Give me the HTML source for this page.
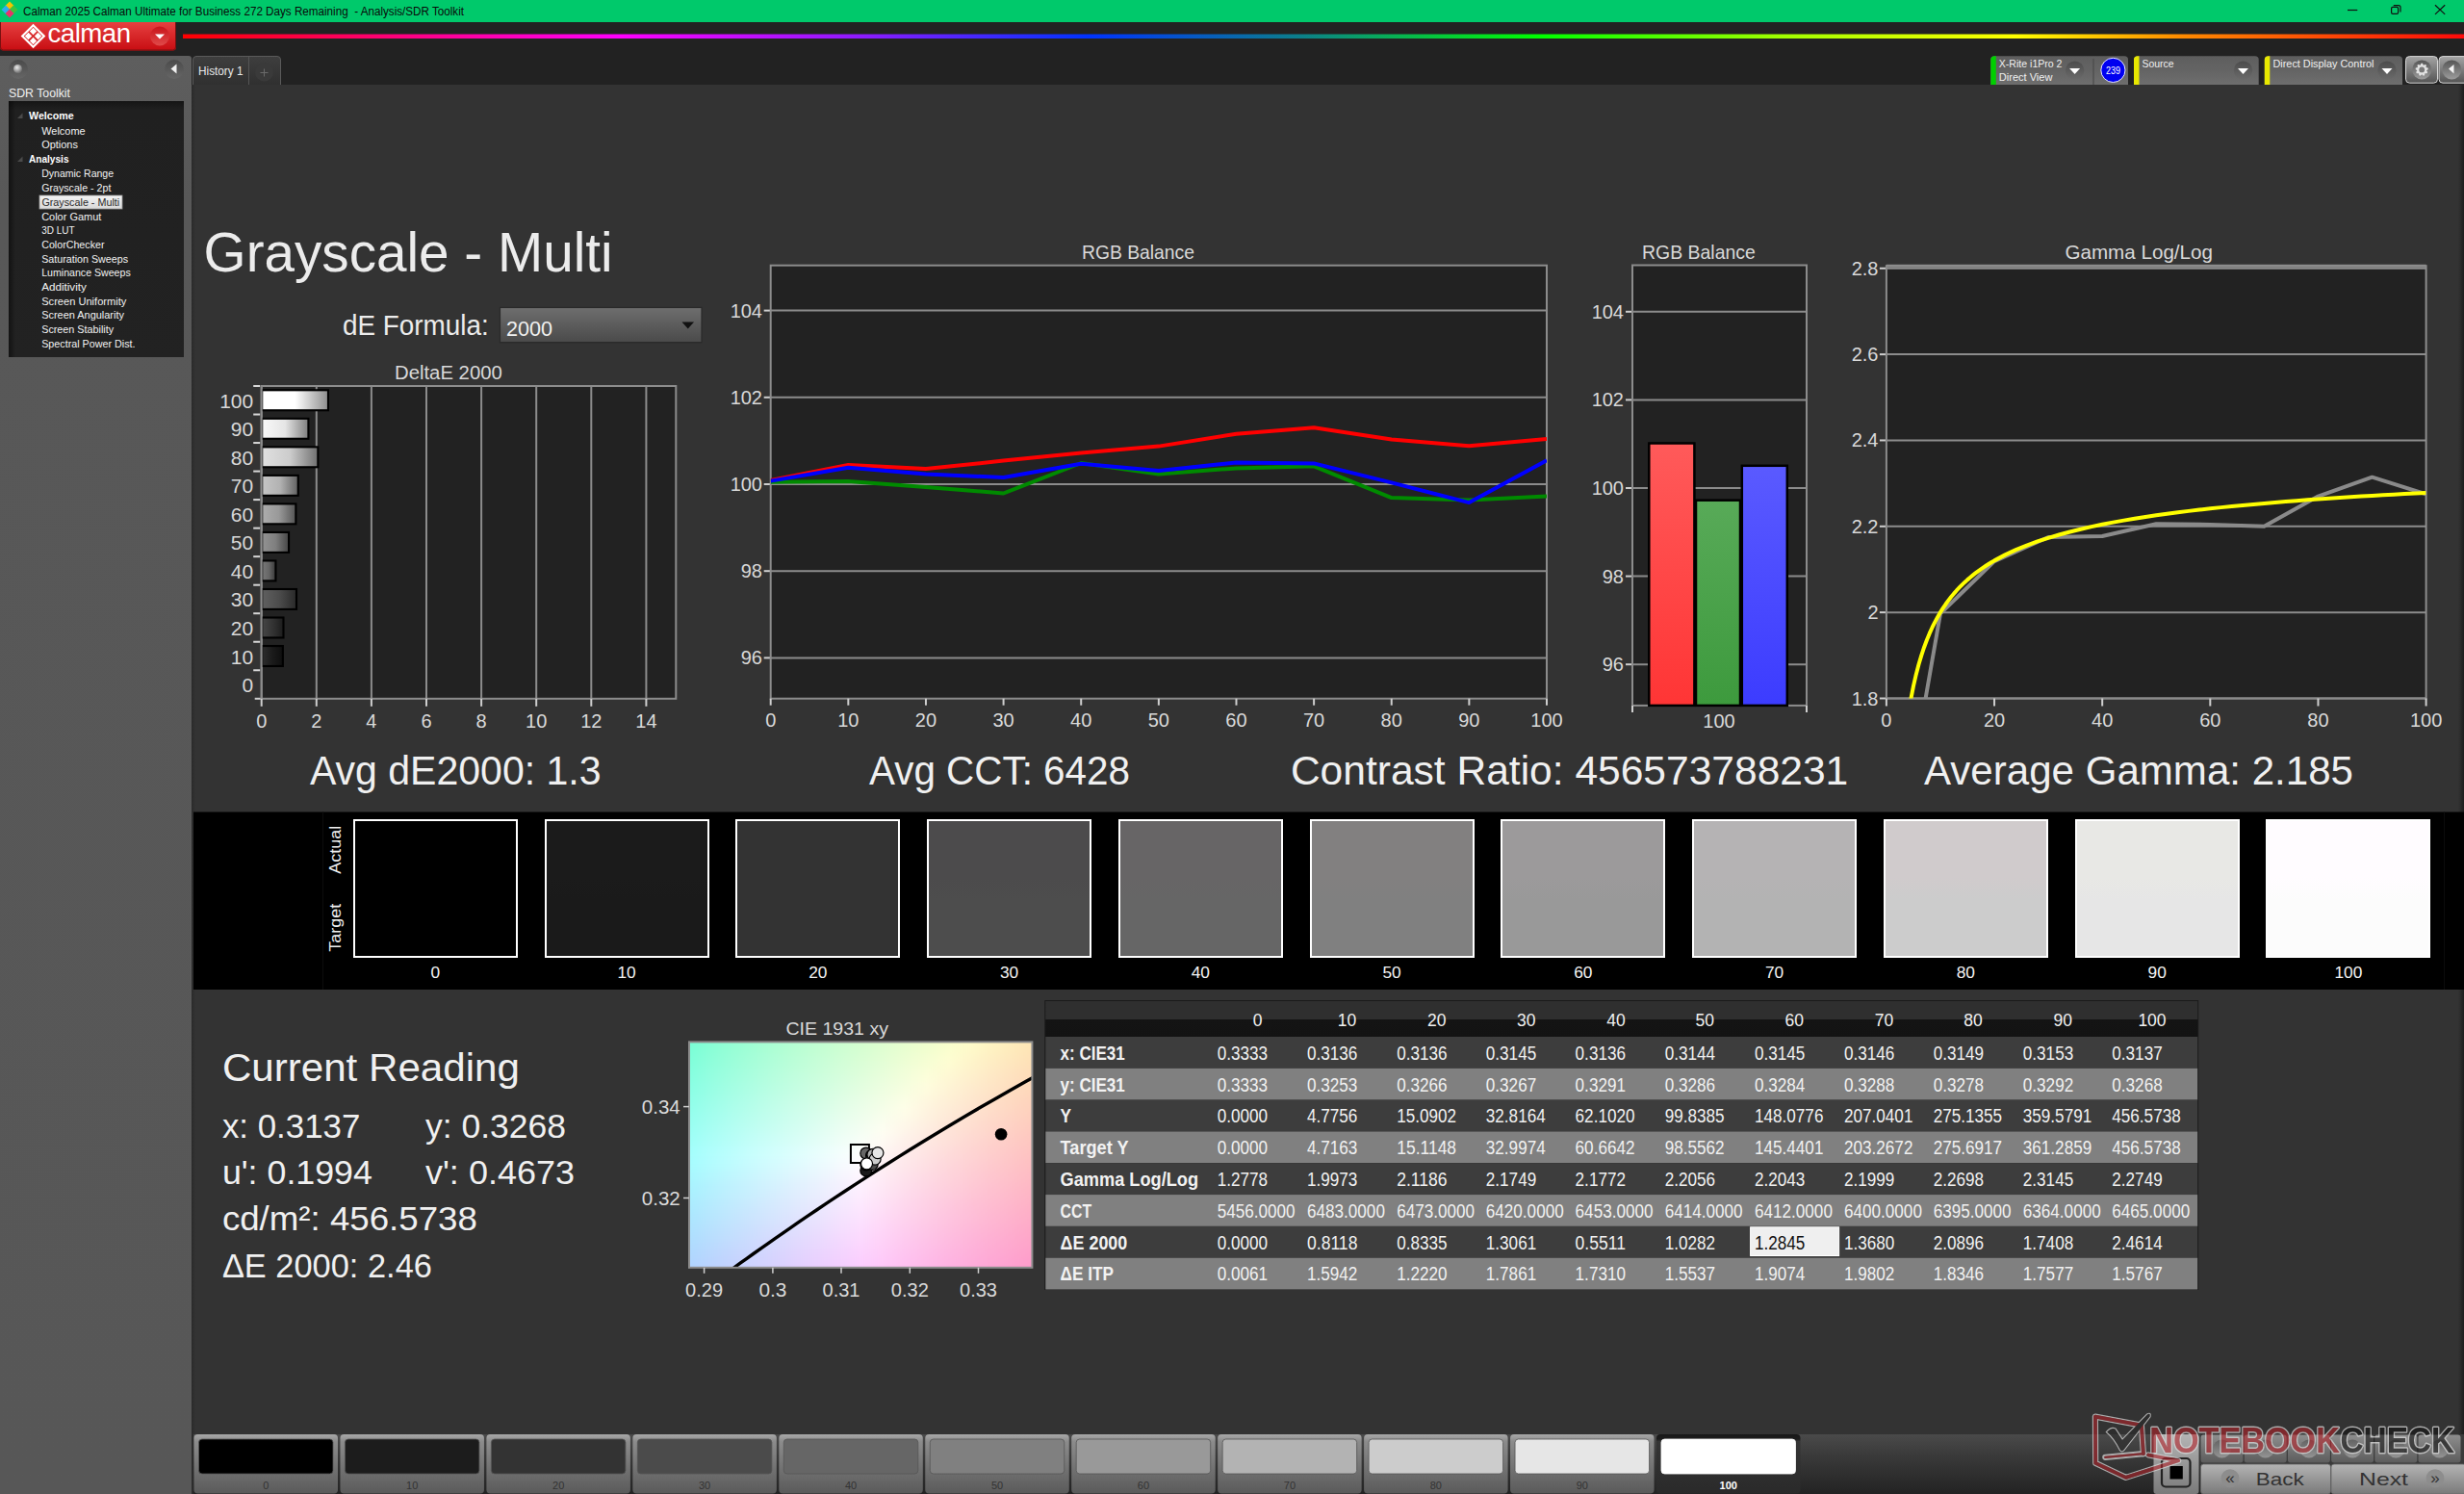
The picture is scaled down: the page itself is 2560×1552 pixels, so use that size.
<!DOCTYPE html>
<html><head><meta charset="utf-8"><title>Calman - Grayscale Multi</title>
<style>html,body{margin:0;padding:0;background:#333;overflow:hidden;width:2560px;height:1552px}svg{display:block}text{font-family:"Liberation Sans",sans-serif}</style>
</head><body><svg width="2560" height="1552" viewBox="0 0 2560 1552" font-family='"Liberation Sans", sans-serif'><defs><linearGradient id="rainbow" x1="0" y1="0" x2="1" y2="0"><stop offset="0" stop-color="#ff0000"/><stop offset="0.192" stop-color="#ff00ff"/><stop offset="0.3" stop-color="#8a1cff"/><stop offset="0.397" stop-color="#0033ff"/><stop offset="0.49" stop-color="#0c7f8a"/><stop offset="0.595" stop-color="#00ff00"/><stop offset="0.7" stop-color="#a0ff00"/><stop offset="0.803" stop-color="#ffff00"/><stop offset="0.875" stop-color="#ff8c00"/><stop offset="1" stop-color="#ff0a0a"/></linearGradient><linearGradient id="calred" x1="0" y1="0" x2="0" y2="1"><stop offset="0" stop-color="#e64040"/><stop offset="1" stop-color="#c80d12"/></linearGradient><linearGradient id="calcirc" x1="0" y1="0" x2="0" y2="1"><stop offset="0" stop-color="#c8141a"/><stop offset="1" stop-color="#e04a4a"/></linearGradient><linearGradient id="sideg" x1="0" y1="0" x2="0" y2="1"><stop offset="0" stop-color="#5e5e5e"/><stop offset="0.1" stop-color="#585858"/><stop offset="1" stop-color="#575757"/></linearGradient><linearGradient id="sbtn" x1="0" y1="0" x2="0" y2="1"><stop offset="0" stop-color="#4a4a4a"/><stop offset="1" stop-color="#666"/></linearGradient><linearGradient id="treeg" x1="0" y1="0" x2="0" y2="1"><stop offset="0" stop-color="#151515"/><stop offset="0.035" stop-color="#202020"/><stop offset="1" stop-color="#222222"/></linearGradient><linearGradient id="selg" x1="0" y1="0" x2="0" y2="1"><stop offset="0" stop-color="#f4f4f4"/><stop offset="1" stop-color="#d8d8d8"/></linearGradient><linearGradient id="tabg" x1="0" y1="0" x2="0" y2="1"><stop offset="0" stop-color="#3e3e3e"/><stop offset="1" stop-color="#303030"/></linearGradient><linearGradient id="tbox" x1="0" y1="0" x2="0" y2="1"><stop offset="0" stop-color="#5e5e5e"/><stop offset="0.5" stop-color="#646464"/><stop offset="1" stop-color="#6e6e6e"/></linearGradient><linearGradient id="ddc" x1="0" y1="0" x2="0" y2="1"><stop offset="0" stop-color="#4c4c4c"/><stop offset="1" stop-color="#6a6a6a"/></linearGradient><linearGradient id="gbtn" x1="0" y1="0" x2="0" y2="1"><stop offset="0" stop-color="#a4a4a4"/><stop offset="0.45" stop-color="#808080"/><stop offset="1" stop-color="#545454"/></linearGradient><linearGradient id="gcirc" x1="0" y1="0" x2="0" y2="1"><stop offset="0" stop-color="#555555"/><stop offset="1" stop-color="#9c9c9c"/></linearGradient><linearGradient id="rstrip" x1="0" y1="0" x2="1" y2="0"><stop offset="0" stop-color="#333333"/><stop offset="1" stop-color="#1c1c1c"/></linearGradient><linearGradient id="lshade" x1="0" y1="0" x2="1" y2="0"><stop offset="0" stop-color="#2a2a2a"/><stop offset="1" stop-color="#333333"/></linearGradient><linearGradient id="ddbox" x1="0" y1="0" x2="0" y2="1"><stop offset="0" stop-color="#6e6e6e"/><stop offset="1" stop-color="#4a4a4a"/></linearGradient><linearGradient id="bar100" x1="0" y1="0" x2="1" y2="0"><stop offset="0" stop-color="rgb(255,255,255)"/><stop offset="0.5" stop-color="rgb(255,255,255)"/><stop offset="1" stop-color="rgb(140,140,140)"/></linearGradient><linearGradient id="bar90" x1="0" y1="0" x2="1" y2="0"><stop offset="0" stop-color="rgb(249,249,249)"/><stop offset="0.5" stop-color="rgb(229,229,229)"/><stop offset="1" stop-color="rgb(125,125,125)"/></linearGradient><linearGradient id="bar80" x1="0" y1="0" x2="1" y2="0"><stop offset="0" stop-color="rgb(224,224,224)"/><stop offset="0.5" stop-color="rgb(204,204,204)"/><stop offset="1" stop-color="rgb(112,112,112)"/></linearGradient><linearGradient id="bar70" x1="0" y1="0" x2="1" y2="0"><stop offset="0" stop-color="rgb(198,198,198)"/><stop offset="0.5" stop-color="rgb(178,178,178)"/><stop offset="1" stop-color="rgb(97,97,97)"/></linearGradient><linearGradient id="bar60" x1="0" y1="0" x2="1" y2="0"><stop offset="0" stop-color="rgb(173,173,173)"/><stop offset="0.5" stop-color="rgb(153,153,153)"/><stop offset="1" stop-color="rgb(84,84,84)"/></linearGradient><linearGradient id="bar50" x1="0" y1="0" x2="1" y2="0"><stop offset="0" stop-color="rgb(147,147,147)"/><stop offset="0.5" stop-color="rgb(127,127,127)"/><stop offset="1" stop-color="rgb(69,69,69)"/></linearGradient><linearGradient id="bar40" x1="0" y1="0" x2="1" y2="0"><stop offset="0" stop-color="rgb(122,122,122)"/><stop offset="0.5" stop-color="rgb(102,102,102)"/><stop offset="1" stop-color="rgb(56,56,56)"/></linearGradient><linearGradient id="bar30" x1="0" y1="0" x2="1" y2="0"><stop offset="0" stop-color="rgb(96,96,96)"/><stop offset="0.5" stop-color="rgb(76,76,76)"/><stop offset="1" stop-color="rgb(41,41,41)"/></linearGradient><linearGradient id="bar20" x1="0" y1="0" x2="1" y2="0"><stop offset="0" stop-color="rgb(71,71,71)"/><stop offset="0.5" stop-color="rgb(51,51,51)"/><stop offset="1" stop-color="rgb(28,28,28)"/></linearGradient><linearGradient id="bar10" x1="0" y1="0" x2="1" y2="0"><stop offset="0" stop-color="rgb(46,46,46)"/><stop offset="0.5" stop-color="rgb(26,26,26)"/><stop offset="1" stop-color="rgb(14,14,14)"/></linearGradient><linearGradient id="rbar" x1="0" y1="0" x2="0" y2="1"><stop offset="0" stop-color="#ff5a5a"/><stop offset="1" stop-color="#ff3535"/></linearGradient><linearGradient id="gbar" x1="0" y1="0" x2="0" y2="1"><stop offset="0" stop-color="#58aa58"/><stop offset="1" stop-color="#3d9a3d"/></linearGradient><linearGradient id="bbar" x1="0" y1="0" x2="0" y2="1"><stop offset="0" stop-color="#5a5aff"/><stop offset="1" stop-color="#3c3cff"/></linearGradient><linearGradient id="sw0" x1="0" y1="0" x2="0" y2="1"><stop offset="0" stop-color="#000000"/><stop offset="0.42" stop-color="#000000"/><stop offset="0.58" stop-color="#000000"/><stop offset="1" stop-color="#000000"/></linearGradient><linearGradient id="sw1" x1="0" y1="0" x2="0" y2="1"><stop offset="0" stop-color="#1b1b1b"/><stop offset="0.42" stop-color="#1b1b1b"/><stop offset="0.58" stop-color="#1a1a1a"/><stop offset="1" stop-color="#1a1a1a"/></linearGradient><linearGradient id="sw2" x1="0" y1="0" x2="0" y2="1"><stop offset="0" stop-color="#333333"/><stop offset="0.42" stop-color="#333333"/><stop offset="0.58" stop-color="#333333"/><stop offset="1" stop-color="#333333"/></linearGradient><linearGradient id="sw3" x1="0" y1="0" x2="0" y2="1"><stop offset="0" stop-color="#4c4b4c"/><stop offset="0.42" stop-color="#4c4b4c"/><stop offset="0.58" stop-color="#4d4d4d"/><stop offset="1" stop-color="#4d4d4d"/></linearGradient><linearGradient id="sw4" x1="0" y1="0" x2="0" y2="1"><stop offset="0" stop-color="#676566"/><stop offset="0.42" stop-color="#676566"/><stop offset="0.58" stop-color="#666666"/><stop offset="1" stop-color="#666666"/></linearGradient><linearGradient id="sw5" x1="0" y1="0" x2="0" y2="1"><stop offset="0" stop-color="#828080"/><stop offset="0.42" stop-color="#828080"/><stop offset="0.58" stop-color="#808080"/><stop offset="1" stop-color="#808080"/></linearGradient><linearGradient id="sw6" x1="0" y1="0" x2="0" y2="1"><stop offset="0" stop-color="#9c9a9b"/><stop offset="0.42" stop-color="#9c9a9b"/><stop offset="0.58" stop-color="#999999"/><stop offset="1" stop-color="#999999"/></linearGradient><linearGradient id="sw7" x1="0" y1="0" x2="0" y2="1"><stop offset="0" stop-color="#b5b3b4"/><stop offset="0.42" stop-color="#b5b3b4"/><stop offset="0.58" stop-color="#b3b3b3"/><stop offset="1" stop-color="#b3b3b3"/></linearGradient><linearGradient id="sw8" x1="0" y1="0" x2="0" y2="1"><stop offset="0" stop-color="#d0cbcc"/><stop offset="0.42" stop-color="#d0cbcc"/><stop offset="0.58" stop-color="#cccccc"/><stop offset="1" stop-color="#cccccc"/></linearGradient><linearGradient id="sw9" x1="0" y1="0" x2="0" y2="1"><stop offset="0" stop-color="#e8e8e5"/><stop offset="0.42" stop-color="#e8e8e5"/><stop offset="0.58" stop-color="#e6e6e6"/><stop offset="1" stop-color="#e6e6e6"/></linearGradient><linearGradient id="sw10" x1="0" y1="0" x2="0" y2="1"><stop offset="0" stop-color="#fffcff"/><stop offset="0.42" stop-color="#fffcff"/><stop offset="0.58" stop-color="#fcfcfc"/><stop offset="1" stop-color="#fcfcfc"/></linearGradient><linearGradient id="cie0" x1="0" y1="0" x2="1" y2="0"><stop offset="0.0" stop-color="#71ffd2"/><stop offset="0.0625" stop-color="#81ffd1"/><stop offset="0.125" stop-color="#8fffd1"/><stop offset="0.1875" stop-color="#9bffd0"/><stop offset="0.25" stop-color="#a7ffcf"/><stop offset="0.3125" stop-color="#b2ffce"/><stop offset="0.375" stop-color="#bcffcd"/><stop offset="0.4375" stop-color="#c7ffcd"/><stop offset="0.5" stop-color="#d0ffcc"/><stop offset="0.5625" stop-color="#daffcb"/><stop offset="0.625" stop-color="#e3ffca"/><stop offset="0.6875" stop-color="#ecffc9"/><stop offset="0.75" stop-color="#f5ffc8"/><stop offset="0.8125" stop-color="#feffc7"/><stop offset="0.875" stop-color="#fff8c0"/><stop offset="0.9375" stop-color="#fff0b9"/><stop offset="1.0" stop-color="#ffe9b2"/></linearGradient><linearGradient id="cie1" x1="0" y1="0" x2="1" y2="0"><stop offset="0.0" stop-color="#74ffd4"/><stop offset="0.0625" stop-color="#84ffd4"/><stop offset="0.125" stop-color="#91ffd3"/><stop offset="0.1875" stop-color="#9effd2"/><stop offset="0.25" stop-color="#a9ffd2"/><stop offset="0.3125" stop-color="#b4ffd1"/><stop offset="0.375" stop-color="#bfffd0"/><stop offset="0.4375" stop-color="#c9ffcf"/><stop offset="0.5" stop-color="#d3ffcf"/><stop offset="0.5625" stop-color="#dcffce"/><stop offset="0.625" stop-color="#e6ffcd"/><stop offset="0.6875" stop-color="#efffcc"/><stop offset="0.75" stop-color="#f8ffcb"/><stop offset="0.8125" stop-color="#fffec9"/><stop offset="0.875" stop-color="#fff5c1"/><stop offset="0.9375" stop-color="#ffeeba"/><stop offset="1.0" stop-color="#ffe6b3"/></linearGradient><linearGradient id="cie2" x1="0" y1="0" x2="1" y2="0"><stop offset="0.0" stop-color="#77ffd7"/><stop offset="0.0625" stop-color="#86ffd6"/><stop offset="0.125" stop-color="#94ffd6"/><stop offset="0.1875" stop-color="#a0ffd5"/><stop offset="0.25" stop-color="#acffd4"/><stop offset="0.3125" stop-color="#b7ffd4"/><stop offset="0.375" stop-color="#c2ffd3"/><stop offset="0.4375" stop-color="#ccffd2"/><stop offset="0.5" stop-color="#d5ffd1"/><stop offset="0.5625" stop-color="#dfffd1"/><stop offset="0.625" stop-color="#e8ffd0"/><stop offset="0.6875" stop-color="#f1ffcf"/><stop offset="0.75" stop-color="#faffce"/><stop offset="0.8125" stop-color="#fffbca"/><stop offset="0.875" stop-color="#fff3c2"/><stop offset="0.9375" stop-color="#ffebbb"/><stop offset="1.0" stop-color="#ffe4b4"/></linearGradient><linearGradient id="cie3" x1="0" y1="0" x2="1" y2="0"><stop offset="0.0" stop-color="#7affda"/><stop offset="0.0625" stop-color="#89ffd9"/><stop offset="0.125" stop-color="#97ffd8"/><stop offset="0.1875" stop-color="#a3ffd8"/><stop offset="0.25" stop-color="#afffd7"/><stop offset="0.3125" stop-color="#baffd6"/><stop offset="0.375" stop-color="#c4ffd6"/><stop offset="0.4375" stop-color="#ceffd5"/><stop offset="0.5" stop-color="#d8ffd4"/><stop offset="0.5625" stop-color="#e2ffd4"/><stop offset="0.625" stop-color="#ebffd3"/><stop offset="0.6875" stop-color="#f4ffd2"/><stop offset="0.75" stop-color="#fdffd1"/><stop offset="0.8125" stop-color="#fff8cb"/><stop offset="0.875" stop-color="#fff0c3"/><stop offset="0.9375" stop-color="#ffe9bc"/><stop offset="1.0" stop-color="#ffe1b5"/></linearGradient><linearGradient id="cie4" x1="0" y1="0" x2="1" y2="0"><stop offset="0.0" stop-color="#7dffdc"/><stop offset="0.0625" stop-color="#8cffdc"/><stop offset="0.125" stop-color="#99ffdb"/><stop offset="0.1875" stop-color="#a6ffda"/><stop offset="0.25" stop-color="#b1ffda"/><stop offset="0.3125" stop-color="#bcffd9"/><stop offset="0.375" stop-color="#c7ffd9"/><stop offset="0.4375" stop-color="#d1ffd8"/><stop offset="0.5" stop-color="#dbffd7"/><stop offset="0.5625" stop-color="#e4ffd7"/><stop offset="0.625" stop-color="#eeffd6"/><stop offset="0.6875" stop-color="#f7ffd5"/><stop offset="0.75" stop-color="#fffed3"/><stop offset="0.8125" stop-color="#fff5cb"/><stop offset="0.875" stop-color="#ffedc4"/><stop offset="0.9375" stop-color="#ffe6bd"/><stop offset="1.0" stop-color="#ffdfb6"/></linearGradient><linearGradient id="cie5" x1="0" y1="0" x2="1" y2="0"><stop offset="0.0" stop-color="#80ffdf"/><stop offset="0.0625" stop-color="#8fffde"/><stop offset="0.125" stop-color="#9cffde"/><stop offset="0.1875" stop-color="#a8ffdd"/><stop offset="0.25" stop-color="#b4ffdd"/><stop offset="0.3125" stop-color="#bfffdc"/><stop offset="0.375" stop-color="#c9ffdb"/><stop offset="0.4375" stop-color="#d4ffdb"/><stop offset="0.5" stop-color="#ddffda"/><stop offset="0.5625" stop-color="#e7ffda"/><stop offset="0.625" stop-color="#f1ffd9"/><stop offset="0.6875" stop-color="#faffd8"/><stop offset="0.75" stop-color="#fffbd4"/><stop offset="0.8125" stop-color="#fff3cc"/><stop offset="0.875" stop-color="#ffebc5"/><stop offset="0.9375" stop-color="#ffe3be"/><stop offset="1.0" stop-color="#ffddb7"/></linearGradient><linearGradient id="cie6" x1="0" y1="0" x2="1" y2="0"><stop offset="0.0" stop-color="#83ffe1"/><stop offset="0.0625" stop-color="#92ffe1"/><stop offset="0.125" stop-color="#9fffe0"/><stop offset="0.1875" stop-color="#abffe0"/><stop offset="0.25" stop-color="#b7ffdf"/><stop offset="0.3125" stop-color="#c2ffdf"/><stop offset="0.375" stop-color="#ccffde"/><stop offset="0.4375" stop-color="#d6ffde"/><stop offset="0.5" stop-color="#e0ffdd"/><stop offset="0.5625" stop-color="#eaffdd"/><stop offset="0.625" stop-color="#f3ffdc"/><stop offset="0.6875" stop-color="#fdffdb"/><stop offset="0.75" stop-color="#fff8d5"/><stop offset="0.8125" stop-color="#fff0cd"/><stop offset="0.875" stop-color="#ffe8c6"/><stop offset="0.9375" stop-color="#ffe1bf"/><stop offset="1.0" stop-color="#ffdab8"/></linearGradient><linearGradient id="cie7" x1="0" y1="0" x2="1" y2="0"><stop offset="0.0" stop-color="#86ffe4"/><stop offset="0.0625" stop-color="#94ffe4"/><stop offset="0.125" stop-color="#a2ffe3"/><stop offset="0.1875" stop-color="#aeffe3"/><stop offset="0.25" stop-color="#b9ffe2"/><stop offset="0.3125" stop-color="#c4ffe2"/><stop offset="0.375" stop-color="#cfffe1"/><stop offset="0.4375" stop-color="#d9ffe1"/><stop offset="0.5" stop-color="#e3ffe0"/><stop offset="0.5625" stop-color="#edffe0"/><stop offset="0.625" stop-color="#f6ffdf"/><stop offset="0.6875" stop-color="#fffede"/><stop offset="0.75" stop-color="#fff5d6"/><stop offset="0.8125" stop-color="#ffedce"/><stop offset="0.875" stop-color="#ffe6c6"/><stop offset="0.9375" stop-color="#ffdec0"/><stop offset="1.0" stop-color="#ffd8b9"/></linearGradient><linearGradient id="cie8" x1="0" y1="0" x2="1" y2="0"><stop offset="0.0" stop-color="#89ffe7"/><stop offset="0.0625" stop-color="#97ffe6"/><stop offset="0.125" stop-color="#a4ffe6"/><stop offset="0.1875" stop-color="#b0ffe6"/><stop offset="0.25" stop-color="#bcffe5"/><stop offset="0.3125" stop-color="#c7ffe5"/><stop offset="0.375" stop-color="#d2ffe4"/><stop offset="0.4375" stop-color="#dcffe4"/><stop offset="0.5" stop-color="#e6ffe3"/><stop offset="0.5625" stop-color="#f0ffe3"/><stop offset="0.625" stop-color="#f9ffe2"/><stop offset="0.6875" stop-color="#fffbdf"/><stop offset="0.75" stop-color="#fff3d6"/><stop offset="0.8125" stop-color="#ffeacf"/><stop offset="0.875" stop-color="#ffe3c7"/><stop offset="0.9375" stop-color="#ffdcc0"/><stop offset="1.0" stop-color="#ffd5ba"/></linearGradient><linearGradient id="cie9" x1="0" y1="0" x2="1" y2="0"><stop offset="0.0" stop-color="#8cffea"/><stop offset="0.0625" stop-color="#9affe9"/><stop offset="0.125" stop-color="#a7ffe9"/><stop offset="0.1875" stop-color="#b3ffe9"/><stop offset="0.25" stop-color="#bfffe8"/><stop offset="0.3125" stop-color="#caffe8"/><stop offset="0.375" stop-color="#d4ffe7"/><stop offset="0.4375" stop-color="#dfffe7"/><stop offset="0.5" stop-color="#e9ffe7"/><stop offset="0.5625" stop-color="#f3ffe6"/><stop offset="0.625" stop-color="#fcffe6"/><stop offset="0.6875" stop-color="#fff8df"/><stop offset="0.75" stop-color="#fff0d7"/><stop offset="0.8125" stop-color="#ffe8cf"/><stop offset="0.875" stop-color="#ffe0c8"/><stop offset="0.9375" stop-color="#ffd9c1"/><stop offset="1.0" stop-color="#ffd3bb"/></linearGradient><linearGradient id="cie10" x1="0" y1="0" x2="1" y2="0"><stop offset="0.0" stop-color="#8fffec"/><stop offset="0.0625" stop-color="#9dffec"/><stop offset="0.125" stop-color="#aaffec"/><stop offset="0.1875" stop-color="#b6ffeb"/><stop offset="0.25" stop-color="#c2ffeb"/><stop offset="0.3125" stop-color="#cdffeb"/><stop offset="0.375" stop-color="#d7ffea"/><stop offset="0.4375" stop-color="#e2ffea"/><stop offset="0.5" stop-color="#ecffea"/><stop offset="0.5625" stop-color="#f6ffe9"/><stop offset="0.625" stop-color="#ffffe9"/><stop offset="0.6875" stop-color="#fff5e0"/><stop offset="0.75" stop-color="#ffedd8"/><stop offset="0.8125" stop-color="#ffe5d0"/><stop offset="0.875" stop-color="#ffdec9"/><stop offset="0.9375" stop-color="#ffd7c2"/><stop offset="1.0" stop-color="#ffd0bc"/></linearGradient><linearGradient id="cie11" x1="0" y1="0" x2="1" y2="0"><stop offset="0.0" stop-color="#92ffef"/><stop offset="0.0625" stop-color="#a0ffef"/><stop offset="0.125" stop-color="#adffef"/><stop offset="0.1875" stop-color="#b9ffee"/><stop offset="0.25" stop-color="#c4ffee"/><stop offset="0.3125" stop-color="#cfffee"/><stop offset="0.375" stop-color="#daffee"/><stop offset="0.4375" stop-color="#e5ffed"/><stop offset="0.5" stop-color="#efffed"/><stop offset="0.5625" stop-color="#f9ffed"/><stop offset="0.625" stop-color="#fffce9"/><stop offset="0.6875" stop-color="#fff3e0"/><stop offset="0.75" stop-color="#ffead8"/><stop offset="0.8125" stop-color="#ffe2d1"/><stop offset="0.875" stop-color="#ffdbca"/><stop offset="0.9375" stop-color="#ffd4c3"/><stop offset="1.0" stop-color="#ffcebc"/></linearGradient><linearGradient id="cie12" x1="0" y1="0" x2="1" y2="0"><stop offset="0.0" stop-color="#95fff2"/><stop offset="0.0625" stop-color="#a3fff2"/><stop offset="0.125" stop-color="#b0fff2"/><stop offset="0.1875" stop-color="#bcfff1"/><stop offset="0.25" stop-color="#c7fff1"/><stop offset="0.3125" stop-color="#d2fff1"/><stop offset="0.375" stop-color="#ddfff1"/><stop offset="0.4375" stop-color="#e8fff1"/><stop offset="0.5" stop-color="#f2fff0"/><stop offset="0.5625" stop-color="#fcfff0"/><stop offset="0.625" stop-color="#fff9ea"/><stop offset="0.6875" stop-color="#fff0e1"/><stop offset="0.75" stop-color="#ffe7d9"/><stop offset="0.8125" stop-color="#ffe0d1"/><stop offset="0.875" stop-color="#ffd8ca"/><stop offset="0.9375" stop-color="#ffd2c4"/><stop offset="1.0" stop-color="#ffcbbd"/></linearGradient><linearGradient id="cie13" x1="0" y1="0" x2="1" y2="0"><stop offset="0.0" stop-color="#98fff5"/><stop offset="0.0625" stop-color="#a6fff5"/><stop offset="0.125" stop-color="#b3fff5"/><stop offset="0.1875" stop-color="#bffff5"/><stop offset="0.25" stop-color="#cafff4"/><stop offset="0.3125" stop-color="#d5fff4"/><stop offset="0.375" stop-color="#e0fff4"/><stop offset="0.4375" stop-color="#ebfff4"/><stop offset="0.5" stop-color="#f5fff4"/><stop offset="0.5625" stop-color="#fffff3"/><stop offset="0.625" stop-color="#fff6ea"/><stop offset="0.6875" stop-color="#ffede2"/><stop offset="0.75" stop-color="#ffe4d9"/><stop offset="0.8125" stop-color="#ffddd2"/><stop offset="0.875" stop-color="#ffd6cb"/><stop offset="0.9375" stop-color="#ffcfc4"/><stop offset="1.0" stop-color="#ffc9be"/></linearGradient><linearGradient id="cie14" x1="0" y1="0" x2="1" y2="0"><stop offset="0.0" stop-color="#9bfff8"/><stop offset="0.0625" stop-color="#a9fff8"/><stop offset="0.125" stop-color="#b5fff8"/><stop offset="0.1875" stop-color="#c2fff8"/><stop offset="0.25" stop-color="#cdfff8"/><stop offset="0.3125" stop-color="#d8fff7"/><stop offset="0.375" stop-color="#e3fff7"/><stop offset="0.4375" stop-color="#eefff7"/><stop offset="0.5" stop-color="#f8fff7"/><stop offset="0.5625" stop-color="#fffcf4"/><stop offset="0.625" stop-color="#fff2eb"/><stop offset="0.6875" stop-color="#ffeae2"/><stop offset="0.75" stop-color="#ffe2da"/><stop offset="0.8125" stop-color="#ffdad3"/><stop offset="0.875" stop-color="#ffd3cc"/><stop offset="0.9375" stop-color="#ffccc5"/><stop offset="1.0" stop-color="#ffc6bf"/></linearGradient><linearGradient id="cie15" x1="0" y1="0" x2="1" y2="0"><stop offset="0.0" stop-color="#9efffb"/><stop offset="0.0625" stop-color="#acfffb"/><stop offset="0.125" stop-color="#b8fffb"/><stop offset="0.1875" stop-color="#c5fffb"/><stop offset="0.25" stop-color="#d0fffb"/><stop offset="0.3125" stop-color="#dbfffb"/><stop offset="0.375" stop-color="#e6fffb"/><stop offset="0.4375" stop-color="#f1fffb"/><stop offset="0.5" stop-color="#fbfffb"/><stop offset="0.5625" stop-color="#fff9f4"/><stop offset="0.625" stop-color="#ffefeb"/><stop offset="0.6875" stop-color="#ffe7e3"/><stop offset="0.75" stop-color="#ffdfdb"/><stop offset="0.8125" stop-color="#ffd7d3"/><stop offset="0.875" stop-color="#ffd0cc"/><stop offset="0.9375" stop-color="#ffcac6"/><stop offset="1.0" stop-color="#ffc4c0"/></linearGradient><linearGradient id="cie16" x1="0" y1="0" x2="1" y2="0"><stop offset="0.0" stop-color="#a1fffe"/><stop offset="0.0625" stop-color="#affffe"/><stop offset="0.125" stop-color="#bbfffe"/><stop offset="0.1875" stop-color="#c8fffe"/><stop offset="0.25" stop-color="#d3fffe"/><stop offset="0.3125" stop-color="#defffe"/><stop offset="0.375" stop-color="#e9fffe"/><stop offset="0.4375" stop-color="#f4fffe"/><stop offset="0.5" stop-color="#fefffe"/><stop offset="0.5625" stop-color="#fff6f5"/><stop offset="0.625" stop-color="#ffecec"/><stop offset="0.6875" stop-color="#ffe4e3"/><stop offset="0.75" stop-color="#ffdcdb"/><stop offset="0.8125" stop-color="#ffd5d4"/><stop offset="0.875" stop-color="#ffcecd"/><stop offset="0.9375" stop-color="#ffc7c7"/><stop offset="1.0" stop-color="#ffc1c0"/></linearGradient><linearGradient id="cie17" x1="0" y1="0" x2="1" y2="0"><stop offset="0.0" stop-color="#a3fdff"/><stop offset="0.0625" stop-color="#b0fdff"/><stop offset="0.125" stop-color="#bdfdff"/><stop offset="0.1875" stop-color="#c9fdff"/><stop offset="0.25" stop-color="#d4fdff"/><stop offset="0.3125" stop-color="#dffdff"/><stop offset="0.375" stop-color="#eafcff"/><stop offset="0.4375" stop-color="#f5fcff"/><stop offset="0.5" stop-color="#fffcff"/><stop offset="0.5625" stop-color="#fff2f5"/><stop offset="0.625" stop-color="#ffe9ec"/><stop offset="0.6875" stop-color="#ffe1e4"/><stop offset="0.75" stop-color="#ffd9dc"/><stop offset="0.8125" stop-color="#ffd2d5"/><stop offset="0.875" stop-color="#ffcbce"/><stop offset="0.9375" stop-color="#ffc5c7"/><stop offset="1.0" stop-color="#ffbfc1"/></linearGradient><linearGradient id="cie18" x1="0" y1="0" x2="1" y2="0"><stop offset="0.0" stop-color="#a4faff"/><stop offset="0.0625" stop-color="#b1faff"/><stop offset="0.125" stop-color="#bdfaff"/><stop offset="0.1875" stop-color="#c9f9ff"/><stop offset="0.25" stop-color="#d5f9ff"/><stop offset="0.3125" stop-color="#e0f9ff"/><stop offset="0.375" stop-color="#eaf9ff"/><stop offset="0.4375" stop-color="#f5f9ff"/><stop offset="0.5" stop-color="#fff9ff"/><stop offset="0.5625" stop-color="#ffeff5"/><stop offset="0.625" stop-color="#ffe6ec"/><stop offset="0.6875" stop-color="#ffdee4"/><stop offset="0.75" stop-color="#ffd6dc"/><stop offset="0.8125" stop-color="#ffcfd5"/><stop offset="0.875" stop-color="#ffc8ce"/><stop offset="0.9375" stop-color="#ffc2c8"/><stop offset="1.0" stop-color="#ffbcc2"/></linearGradient><linearGradient id="cie19" x1="0" y1="0" x2="1" y2="0"><stop offset="0.0" stop-color="#a5f7ff"/><stop offset="0.0625" stop-color="#b2f7ff"/><stop offset="0.125" stop-color="#bef6ff"/><stop offset="0.1875" stop-color="#caf6ff"/><stop offset="0.25" stop-color="#d5f6ff"/><stop offset="0.3125" stop-color="#e0f6ff"/><stop offset="0.375" stop-color="#eaf6ff"/><stop offset="0.4375" stop-color="#f5f5ff"/><stop offset="0.5" stop-color="#fff5ff"/><stop offset="0.5625" stop-color="#ffecf6"/><stop offset="0.625" stop-color="#ffe3ed"/><stop offset="0.6875" stop-color="#ffdbe5"/><stop offset="0.75" stop-color="#ffd4dd"/><stop offset="0.8125" stop-color="#ffcdd6"/><stop offset="0.875" stop-color="#ffc6cf"/><stop offset="0.9375" stop-color="#ffc0c9"/><stop offset="1.0" stop-color="#ffbac3"/></linearGradient><linearGradient id="cie20" x1="0" y1="0" x2="1" y2="0"><stop offset="0.0" stop-color="#a6f4ff"/><stop offset="0.0625" stop-color="#b2f3ff"/><stop offset="0.125" stop-color="#bff3ff"/><stop offset="0.1875" stop-color="#caf3ff"/><stop offset="0.25" stop-color="#d5f3ff"/><stop offset="0.3125" stop-color="#e0f2ff"/><stop offset="0.375" stop-color="#eaf2ff"/><stop offset="0.4375" stop-color="#f4f2ff"/><stop offset="0.5" stop-color="#fef2ff"/><stop offset="0.5625" stop-color="#ffe9f6"/><stop offset="0.625" stop-color="#ffe0ed"/><stop offset="0.6875" stop-color="#ffd8e5"/><stop offset="0.75" stop-color="#ffd1dd"/><stop offset="0.8125" stop-color="#ffcad6"/><stop offset="0.875" stop-color="#ffc3d0"/><stop offset="0.9375" stop-color="#ffbdc9"/><stop offset="1.0" stop-color="#ffb7c3"/></linearGradient><linearGradient id="cie21" x1="0" y1="0" x2="1" y2="0"><stop offset="0.0" stop-color="#a7f1ff"/><stop offset="0.0625" stop-color="#b3f0ff"/><stop offset="0.125" stop-color="#bff0ff"/><stop offset="0.1875" stop-color="#caf0ff"/><stop offset="0.25" stop-color="#d5efff"/><stop offset="0.3125" stop-color="#e0efff"/><stop offset="0.375" stop-color="#eaefff"/><stop offset="0.4375" stop-color="#f4efff"/><stop offset="0.5" stop-color="#feeeff"/><stop offset="0.5625" stop-color="#ffe6f6"/><stop offset="0.625" stop-color="#ffddee"/><stop offset="0.6875" stop-color="#ffd5e6"/><stop offset="0.75" stop-color="#ffcede"/><stop offset="0.8125" stop-color="#ffc7d7"/><stop offset="0.875" stop-color="#ffc0d0"/><stop offset="0.9375" stop-color="#ffbaca"/><stop offset="1.0" stop-color="#ffb4c4"/></linearGradient><linearGradient id="cie22" x1="0" y1="0" x2="1" y2="0"><stop offset="0.0" stop-color="#a8eeff"/><stop offset="0.0625" stop-color="#b4edff"/><stop offset="0.125" stop-color="#c0edff"/><stop offset="0.1875" stop-color="#cbedff"/><stop offset="0.25" stop-color="#d6ecff"/><stop offset="0.3125" stop-color="#e0ecff"/><stop offset="0.375" stop-color="#eaecff"/><stop offset="0.4375" stop-color="#f4ebff"/><stop offset="0.5" stop-color="#feebff"/><stop offset="0.5625" stop-color="#ffe3f7"/><stop offset="0.625" stop-color="#ffdaee"/><stop offset="0.6875" stop-color="#ffd2e6"/><stop offset="0.75" stop-color="#ffcbdf"/><stop offset="0.8125" stop-color="#ffc4d7"/><stop offset="0.875" stop-color="#ffbed1"/><stop offset="0.9375" stop-color="#ffb8cb"/><stop offset="1.0" stop-color="#ffb2c5"/></linearGradient><linearGradient id="cie23" x1="0" y1="0" x2="1" y2="0"><stop offset="0.0" stop-color="#a8ebff"/><stop offset="0.0625" stop-color="#b5eaff"/><stop offset="0.125" stop-color="#c0eaff"/><stop offset="0.1875" stop-color="#cbe9ff"/><stop offset="0.25" stop-color="#d6e9ff"/><stop offset="0.3125" stop-color="#e0e9ff"/><stop offset="0.375" stop-color="#eae8ff"/><stop offset="0.4375" stop-color="#f4e8ff"/><stop offset="0.5" stop-color="#fee7ff"/><stop offset="0.5625" stop-color="#ffe0f7"/><stop offset="0.625" stop-color="#ffd7ee"/><stop offset="0.6875" stop-color="#ffd0e6"/><stop offset="0.75" stop-color="#ffc8df"/><stop offset="0.8125" stop-color="#ffc1d8"/><stop offset="0.875" stop-color="#ffbbd1"/><stop offset="0.9375" stop-color="#ffb5cb"/><stop offset="1.0" stop-color="#ffafc5"/></linearGradient><linearGradient id="cie24" x1="0" y1="0" x2="1" y2="0"><stop offset="0.0" stop-color="#a9e8ff"/><stop offset="0.0625" stop-color="#b5e7ff"/><stop offset="0.125" stop-color="#c1e7ff"/><stop offset="0.1875" stop-color="#cce6ff"/><stop offset="0.25" stop-color="#d6e6ff"/><stop offset="0.3125" stop-color="#e0e5ff"/><stop offset="0.375" stop-color="#eae5ff"/><stop offset="0.4375" stop-color="#f4e4ff"/><stop offset="0.5" stop-color="#fde4ff"/><stop offset="0.5625" stop-color="#ffdcf7"/><stop offset="0.625" stop-color="#ffd4ef"/><stop offset="0.6875" stop-color="#ffcde7"/><stop offset="0.75" stop-color="#ffc5e0"/><stop offset="0.8125" stop-color="#ffbfd9"/><stop offset="0.875" stop-color="#ffb8d2"/><stop offset="0.9375" stop-color="#ffb2cc"/><stop offset="1.0" stop-color="#ffadc6"/></linearGradient><linearGradient id="cie25" x1="0" y1="0" x2="1" y2="0"><stop offset="0.0" stop-color="#aae5ff"/><stop offset="0.0625" stop-color="#b6e4ff"/><stop offset="0.125" stop-color="#c1e4ff"/><stop offset="0.1875" stop-color="#cce3ff"/><stop offset="0.25" stop-color="#d6e3ff"/><stop offset="0.3125" stop-color="#e0e2ff"/><stop offset="0.375" stop-color="#eae2ff"/><stop offset="0.4375" stop-color="#f4e1ff"/><stop offset="0.5" stop-color="#fde0ff"/><stop offset="0.5625" stop-color="#ffd9f8"/><stop offset="0.625" stop-color="#ffd1ef"/><stop offset="0.6875" stop-color="#ffcae7"/><stop offset="0.75" stop-color="#ffc3e0"/><stop offset="0.8125" stop-color="#ffbcd9"/><stop offset="0.875" stop-color="#ffb6d3"/><stop offset="0.9375" stop-color="#ffb0cd"/><stop offset="1.0" stop-color="#ffaac7"/></linearGradient><linearGradient id="cie26" x1="0" y1="0" x2="1" y2="0"><stop offset="0.0" stop-color="#abe2ff"/><stop offset="0.0625" stop-color="#b7e1ff"/><stop offset="0.125" stop-color="#c2e1ff"/><stop offset="0.1875" stop-color="#cce0ff"/><stop offset="0.25" stop-color="#d7dfff"/><stop offset="0.3125" stop-color="#e0dfff"/><stop offset="0.375" stop-color="#eadeff"/><stop offset="0.4375" stop-color="#f4deff"/><stop offset="0.5" stop-color="#fdddff"/><stop offset="0.5625" stop-color="#ffd6f8"/><stop offset="0.625" stop-color="#ffcef0"/><stop offset="0.6875" stop-color="#ffc7e8"/><stop offset="0.75" stop-color="#ffc0e0"/><stop offset="0.8125" stop-color="#ffb9da"/><stop offset="0.875" stop-color="#ffb3d3"/><stop offset="0.9375" stop-color="#ffadcd"/><stop offset="1.0" stop-color="#ffa7c7"/></linearGradient><linearGradient id="cie27" x1="0" y1="0" x2="1" y2="0"><stop offset="0.0" stop-color="#acdfff"/><stop offset="0.0625" stop-color="#b7deff"/><stop offset="0.125" stop-color="#c2deff"/><stop offset="0.1875" stop-color="#cdddff"/><stop offset="0.25" stop-color="#d7dcff"/><stop offset="0.3125" stop-color="#e1dcff"/><stop offset="0.375" stop-color="#eadbff"/><stop offset="0.4375" stop-color="#f4daff"/><stop offset="0.5" stop-color="#fddaff"/><stop offset="0.5625" stop-color="#ffd3f8"/><stop offset="0.625" stop-color="#ffcbf0"/><stop offset="0.6875" stop-color="#ffc4e8"/><stop offset="0.75" stop-color="#ffbde1"/><stop offset="0.8125" stop-color="#ffb6da"/><stop offset="0.875" stop-color="#ffb0d4"/><stop offset="0.9375" stop-color="#ffaace"/><stop offset="1.0" stop-color="#ffa5c8"/></linearGradient><linearGradient id="cie28" x1="0" y1="0" x2="1" y2="0"><stop offset="0.0" stop-color="#addcff"/><stop offset="0.0625" stop-color="#b8dbff"/><stop offset="0.125" stop-color="#c3daff"/><stop offset="0.1875" stop-color="#cddaff"/><stop offset="0.25" stop-color="#d7d9ff"/><stop offset="0.3125" stop-color="#e1d8ff"/><stop offset="0.375" stop-color="#ead8ff"/><stop offset="0.4375" stop-color="#f3d7ff"/><stop offset="0.5" stop-color="#fdd6ff"/><stop offset="0.5625" stop-color="#ffd0f8"/><stop offset="0.625" stop-color="#ffc8f0"/><stop offset="0.6875" stop-color="#ffc1e9"/><stop offset="0.75" stop-color="#ffbae1"/><stop offset="0.8125" stop-color="#ffb3db"/><stop offset="0.875" stop-color="#ffadd4"/><stop offset="0.9375" stop-color="#ffa8ce"/><stop offset="1.0" stop-color="#ffa2c9"/></linearGradient><linearGradient id="cie29" x1="0" y1="0" x2="1" y2="0"><stop offset="0.0" stop-color="#add9ff"/><stop offset="0.0625" stop-color="#b8d8ff"/><stop offset="0.125" stop-color="#c3d7ff"/><stop offset="0.1875" stop-color="#cdd7ff"/><stop offset="0.25" stop-color="#d7d6ff"/><stop offset="0.3125" stop-color="#e1d5ff"/><stop offset="0.375" stop-color="#ead4ff"/><stop offset="0.4375" stop-color="#f3d4ff"/><stop offset="0.5" stop-color="#fcd3ff"/><stop offset="0.5625" stop-color="#ffcdf9"/><stop offset="0.625" stop-color="#ffc5f1"/><stop offset="0.6875" stop-color="#ffbee9"/><stop offset="0.75" stop-color="#ffb7e2"/><stop offset="0.8125" stop-color="#ffb1db"/><stop offset="0.875" stop-color="#ffabd5"/><stop offset="0.9375" stop-color="#ffa5cf"/><stop offset="1.0" stop-color="#ff9fc9"/></linearGradient><linearGradient id="cie30" x1="0" y1="0" x2="1" y2="0"><stop offset="0.0" stop-color="#aed6ff"/><stop offset="0.0625" stop-color="#b9d5ff"/><stop offset="0.125" stop-color="#c3d4ff"/><stop offset="0.1875" stop-color="#ced4ff"/><stop offset="0.25" stop-color="#d7d3ff"/><stop offset="0.3125" stop-color="#e1d2ff"/><stop offset="0.375" stop-color="#ead1ff"/><stop offset="0.4375" stop-color="#f3d0ff"/><stop offset="0.5" stop-color="#fccfff"/><stop offset="0.5625" stop-color="#ffcaf9"/><stop offset="0.625" stop-color="#ffc2f1"/><stop offset="0.6875" stop-color="#ffbbe9"/><stop offset="0.75" stop-color="#ffb4e2"/><stop offset="0.8125" stop-color="#ffaedc"/><stop offset="0.875" stop-color="#ffa8d5"/><stop offset="0.9375" stop-color="#ffa2cf"/><stop offset="1.0" stop-color="#ff9cca"/></linearGradient><linearGradient id="cie31" x1="0" y1="0" x2="1" y2="0"><stop offset="0.0" stop-color="#afd3ff"/><stop offset="0.0625" stop-color="#bad2ff"/><stop offset="0.125" stop-color="#c4d1ff"/><stop offset="0.1875" stop-color="#ced1ff"/><stop offset="0.25" stop-color="#d8d0ff"/><stop offset="0.3125" stop-color="#e1cfff"/><stop offset="0.375" stop-color="#eaceff"/><stop offset="0.4375" stop-color="#f3cdff"/><stop offset="0.5" stop-color="#fcccff"/><stop offset="0.5625" stop-color="#ffc6f9"/><stop offset="0.625" stop-color="#ffbff1"/><stop offset="0.6875" stop-color="#ffb8ea"/><stop offset="0.75" stop-color="#ffb1e3"/><stop offset="0.8125" stop-color="#ffabdc"/><stop offset="0.875" stop-color="#ffa5d6"/><stop offset="0.9375" stop-color="#ff9fd0"/><stop offset="1.0" stop-color="#ff9aca"/></linearGradient><linearGradient id="cie32" x1="0" y1="0" x2="1" y2="0"><stop offset="0.0" stop-color="#afd0ff"/><stop offset="0.0625" stop-color="#bacfff"/><stop offset="0.125" stop-color="#c4ceff"/><stop offset="0.1875" stop-color="#cecdff"/><stop offset="0.25" stop-color="#d8cdff"/><stop offset="0.3125" stop-color="#e1ccff"/><stop offset="0.375" stop-color="#eacbff"/><stop offset="0.4375" stop-color="#f3caff"/><stop offset="0.5" stop-color="#fcc9ff"/><stop offset="0.5625" stop-color="#ffc3fa"/><stop offset="0.625" stop-color="#ffbcf2"/><stop offset="0.6875" stop-color="#ffb5ea"/><stop offset="0.75" stop-color="#ffaee3"/><stop offset="0.8125" stop-color="#ffa8dd"/><stop offset="0.875" stop-color="#ffa2d6"/><stop offset="0.9375" stop-color="#ff9cd1"/><stop offset="1.0" stop-color="#ff97cb"/></linearGradient><linearGradient id="cie33" x1="0" y1="0" x2="1" y2="0"><stop offset="0.0" stop-color="#b0cdff"/><stop offset="0.0625" stop-color="#bbccff"/><stop offset="0.125" stop-color="#c5cbff"/><stop offset="0.1875" stop-color="#cfcaff"/><stop offset="0.25" stop-color="#d8c9ff"/><stop offset="0.3125" stop-color="#e1c8ff"/><stop offset="0.375" stop-color="#eac7ff"/><stop offset="0.4375" stop-color="#f3c6ff"/><stop offset="0.5" stop-color="#fcc5ff"/><stop offset="0.5625" stop-color="#ffc0fa"/><stop offset="0.625" stop-color="#ffb9f2"/><stop offset="0.6875" stop-color="#ffb2eb"/><stop offset="0.75" stop-color="#ffabe4"/><stop offset="0.8125" stop-color="#ffa5dd"/><stop offset="0.875" stop-color="#ff9fd7"/><stop offset="0.9375" stop-color="#ff99d1"/><stop offset="1.0" stop-color="#ff94cc"/></linearGradient><linearGradient id="thead" x1="0" y1="0" x2="0" y2="1"><stop offset="0" stop-color="#2f2f2f"/><stop offset="0.5" stop-color="#2f2f2f"/><stop offset="0.52" stop-color="#141414"/><stop offset="1" stop-color="#131313"/></linearGradient><linearGradient id="pbar" x1="0" y1="0" x2="0" y2="1"><stop offset="0" stop-color="#4a4a4a"/><stop offset="0.35" stop-color="#3a3a3a"/><stop offset="1" stop-color="#232323"/></linearGradient><linearGradient id="pbtn" x1="0" y1="0" x2="0" y2="1"><stop offset="0" stop-color="#a8a8a8"/><stop offset="0.12" stop-color="#8c8c8c"/><stop offset="1" stop-color="#5a5a5a"/></linearGradient><linearGradient id="pbtnsel" x1="0" y1="0" x2="0" y2="1"><stop offset="0" stop-color="#181818"/><stop offset="0.08" stop-color="#1c1c1c"/><stop offset="0.12" stop-color="#353535"/><stop offset="1" stop-color="#2a2a2a"/></linearGradient><linearGradient id="ctl" x1="0" y1="0" x2="0" y2="1"><stop offset="0" stop-color="#b4b4b4"/><stop offset="1" stop-color="#7a7a7a"/></linearGradient><linearGradient id="ctl2" x1="0" y1="0" x2="0" y2="1"><stop offset="0" stop-color="#8e8e8e"/><stop offset="1" stop-color="#5c5c5c"/></linearGradient><linearGradient id="ctlc" x1="0" y1="0" x2="0" y2="1"><stop offset="0" stop-color="#5a5a5a"/><stop offset="1" stop-color="#a0a0a0"/></linearGradient></defs><rect x="0.00" y="0.00" width="2560.00" height="1552.00" fill="#333333" /><rect x="0.00" y="0.00" width="2560.00" height="23.00" fill="#00c96b" /><rect x="6.8" y="2.8" width="6.4" height="6.4" fill="#f5c400" transform="rotate(45 10 6)"/><rect x="2.8" y="6.8" width="6.4" height="6.4" fill="#2ab0ef" transform="rotate(45 6 10)"/><rect x="10.8" y="6.8" width="6.4" height="6.4" fill="#3cc43c" transform="rotate(45 14 10)"/><rect x="6.8" y="10.8" width="6.4" height="6.4" fill="#e8336b" transform="rotate(45 10 14)"/><text x="24.00" y="16.00" font-size="12" fill="#0a0a0a" textLength="458.00" lengthAdjust="spacingAndGlyphs" >Calman 2025 Calman Ultimate for Business 272 Days Remaining  - Analysis/SDR Toolkit</text><line x1="2439.00" y1="10.50" x2="2449.30" y2="10.50" stroke="#111" stroke-width="1.2" /><rect x="2484.6" y="7.4" width="7" height="7" rx="1.4" fill="none" stroke="#111" stroke-width="1.2"/><path d="M2486.8 5.6 H2492 Q2494 5.6 2494 7.6 V12.4" fill="none" stroke="#111" stroke-width="1.2"/><path d="M2530 5.2 L2540.2 14.9 M2540.2 5.2 L2530 14.9" stroke="#111" stroke-width="1.2"/><rect x="0.00" y="23.00" width="2560.00" height="65.00" fill="#222222" /><rect x="190.00" y="35.50" width="2370.00" height="4.50" fill="url(#rainbow)" /><path d="M0 23 H183 V49 Q183 52.5 179.5 52.5 H3.5 Q0 52.5 0 49 Z" fill="url(#calred)"/><path d="M0.5 23 V49 Q0.5 52 3.5 52 H179.5 Q182.5 52 182.5 49 V23" fill="none" stroke="#7a1010" stroke-width="1"/><g fill="none" stroke="#fff" stroke-width="2.2"><rect x="26.5" y="29.5" width="16" height="16" transform="rotate(45 34.5 37.5)"/></g><rect x="31.9" y="29.9" width="5.2" height="5.2" fill="#fff" transform="rotate(45 34.5 32.5)"/><rect x="26.9" y="34.9" width="5.2" height="5.2" fill="#fff" transform="rotate(45 29.5 37.5)"/><rect x="36.9" y="34.9" width="5.2" height="5.2" fill="#fff" transform="rotate(45 39.5 37.5)"/><rect x="31.9" y="39.9" width="5.2" height="5.2" fill="#fff" transform="rotate(45 34.5 42.5)"/><text x="49.50" y="43.90" font-size="27" fill="#ffffff" textLength="86.00" lengthAdjust="spacingAndGlyphs" letter-spacing="-0.5">calman</text><circle cx="166" cy="37.5" r="10" fill="url(#calcirc)"/><path d="M161 35.5 H171 L166 40.5 Z" fill="#fff"/><path d="M0 58 H196 Q199 58 199 61 V1552 H0 Z" fill="url(#sideg)"/><circle cx="19" cy="72" r="10" fill="url(#sbtn)"/><radialGradient id="ball" cx="0.4" cy="0.35" r="0.6"><stop offset="0" stop-color="#eee"/><stop offset="1" stop-color="#777"/></radialGradient><circle cx="18.5" cy="71.5" r="4.5" fill="url(#ball)"/><circle cx="181" cy="72" r="10" fill="url(#sbtn)"/><path d="M183.5 66.5 V76.5 L177.5 71.5 Z" fill="#f0f0f0"/><text x="9.00" y="100.50" font-size="13" fill="#f0f0f0" textLength="64.00" lengthAdjust="spacingAndGlyphs" >SDR Toolkit</text><rect x="9.00" y="105.00" width="182.00" height="266.00" fill="url(#treeg)" /><linearGradient id="treesh" x1="0" y1="0" x2="1" y2="0"><stop offset="0" stop-color="#000" stop-opacity="0.45"/><stop offset="1" stop-color="#000" stop-opacity="0"/></linearGradient><rect x="9.00" y="105.00" width="7.00" height="266.00" fill="url(#treesh)" /><path d="M18 123 L23.5 123 L23.5 117.5 Z" fill="#4a4a4a"/><text x="30.00" y="124.00" font-size="11" fill="#ffffff" font-weight="bold" textLength="46.70" lengthAdjust="spacingAndGlyphs" >Welcome</text><text x="43.20" y="139.80" font-size="11" fill="#f2f2f2" textLength="45.50" lengthAdjust="spacingAndGlyphs" >Welcome</text><text x="43.20" y="153.60" font-size="11" fill="#f2f2f2" textLength="37.70" lengthAdjust="spacingAndGlyphs" >Options</text><path d="M18 168 L23.5 168 L23.5 162.5 Z" fill="#4a4a4a"/><text x="30.00" y="169.00" font-size="11" fill="#ffffff" font-weight="bold" textLength="41.50" lengthAdjust="spacingAndGlyphs" >Analysis</text><text x="43.20" y="184.40" font-size="11" fill="#f2f2f2" textLength="74.90" lengthAdjust="spacingAndGlyphs" >Dynamic Range</text><text x="43.20" y="198.60" font-size="11" fill="#f2f2f2" textLength="72.20" lengthAdjust="spacingAndGlyphs" >Grayscale - 2pt</text><rect x="41.00" y="203.00" width="86.00" height="14.00" fill="url(#selg)" stroke="#9a9a9a" stroke-width="0.8"/><text x="43.40" y="213.60" font-size="11" fill="#2a2a2a" textLength="80.80" lengthAdjust="spacingAndGlyphs" >Grayscale - Multi</text><text x="43.20" y="229.00" font-size="11" fill="#f2f2f2" textLength="62.10" lengthAdjust="spacingAndGlyphs" >Color Gamut</text><text x="43.20" y="243.20" font-size="11" fill="#f2f2f2" textLength="34.30" lengthAdjust="spacingAndGlyphs" >3D LUT</text><text x="43.20" y="258.00" font-size="11" fill="#f2f2f2" textLength="65.30" lengthAdjust="spacingAndGlyphs" >ColorChecker</text><text x="43.20" y="272.80" font-size="11" fill="#f2f2f2" textLength="89.90" lengthAdjust="spacingAndGlyphs" >Saturation Sweeps</text><text x="43.20" y="287.00" font-size="11" fill="#f2f2f2" textLength="92.50" lengthAdjust="spacingAndGlyphs" >Luminance Sweeps</text><text x="43.20" y="302.00" font-size="11" fill="#f2f2f2" textLength="46.70" lengthAdjust="spacingAndGlyphs" >Additivity</text><text x="43.20" y="316.80" font-size="11" fill="#f2f2f2" textLength="88.20" lengthAdjust="spacingAndGlyphs" >Screen Uniformity</text><text x="43.20" y="331.00" font-size="11" fill="#f2f2f2" textLength="85.70" lengthAdjust="spacingAndGlyphs" >Screen Angularity</text><text x="43.20" y="345.80" font-size="11" fill="#f2f2f2" textLength="74.90" lengthAdjust="spacingAndGlyphs" >Screen Stability</text><text x="43.20" y="360.60" font-size="11" fill="#f2f2f2" textLength="97.40" lengthAdjust="spacingAndGlyphs" >Spectral Power Dist.</text><path d="M200.5 88 V62 Q200.5 58.5 204 58.5 H288 Q291.5 58.5 291.5 62 V88" fill="url(#tabg)" stroke="#5a5a5a" stroke-width="1"/><line x1="258.50" y1="59.00" x2="258.50" y2="88.00" stroke="#555" stroke-width="1" /><text x="206.00" y="77.80" font-size="12" fill="#e8e8e8" textLength="46.50" lengthAdjust="spacingAndGlyphs" >History 1</text><circle cx="274.5" cy="75" r="9.5" fill="#3a3a3a"/><path d="M270.5 75.5 H278.5 M274.5 71.5 V79.5" stroke="#6a6a6a" stroke-width="1"/><path d="M2068.3 88 V62 Q2068.3 58.3 2072.3 58.3 H2207 Q2211 58.3 2211 62 V88 Z" fill="url(#tbox)"/><path d="M2068.3 88 V62 Q2068.3 58.3 2072.3 58.3 H2073.8 V88 Z" fill="#00d000"/><text x="2076.80" y="69.70" font-size="11" fill="#f0f0f0" textLength="65.70" lengthAdjust="spacingAndGlyphs" >X-Rite i1Pro 2</text><text x="2076.80" y="83.50" font-size="11" fill="#f0f0f0" textLength="55.60" lengthAdjust="spacingAndGlyphs" >Direct View</text><circle cx="2155.6" cy="73.1" r="9.7" fill="url(#ddc)"/><path d="M2150.1 71.1 H2161.1 L2155.6 77.1 Z" fill="#fff"/><line x1="2175.00" y1="61.00" x2="2175.00" y2="88.00" stroke="#4a4a4a" stroke-width="1.2" /><circle cx="2195.4" cy="72.9" r="12.6" fill="#0000f0" stroke="#e8e8ff" stroke-width="1"/><text x="2195.40" y="76.60" font-size="10" fill="#ffffff" text-anchor="middle" textLength="15.00" lengthAdjust="spacingAndGlyphs" >239</text><path d="M2217 88 V62 Q2217 58.3 2221 58.3 H2342.7 Q2346.7 58.3 2346.7 62 V88 Z" fill="url(#tbox)"/><path d="M2217 88 V62 Q2217 58.3 2221 58.3 H2222.5 V88 Z" fill="#e8e800"/><text x="2225.60" y="69.70" font-size="11" fill="#f0f0f0" textLength="33.00" lengthAdjust="spacingAndGlyphs" >Source</text><circle cx="2330.5" cy="73.1" r="9.7" fill="url(#ddc)"/><path d="M2325.0 71.1 H2336.0 L2330.5 77.1 Z" fill="#fff"/><path d="M2352.8 88 V62 Q2352.8 58.3 2356.8 58.3 H2492 Q2496 58.3 2496 62 V88 Z" fill="url(#tbox)"/><path d="M2352.8 88 V62 Q2352.8 58.3 2356.8 58.3 H2358.3 V88 Z" fill="#e8e800"/><text x="2361.50" y="69.70" font-size="11" fill="#f0f0f0" textLength="105.00" lengthAdjust="spacingAndGlyphs" >Direct Display Control</text><circle cx="2480" cy="73.1" r="9.7" fill="url(#ddc)"/><path d="M2474.5 71.1 H2485.5 L2480 77.1 Z" fill="#fff"/><rect x="2499.5" y="58.6" width="33" height="27.6" rx="4" fill="url(#gbtn)" stroke="#d6d6d6" stroke-width="1"/><circle cx="2516.2" cy="72.4" r="10" fill="url(#gcirc)"/><polygon points="2514.52,67.80 2515.51,65.84 2516.89,65.84 2517.88,67.80 2517.88,67.80 2519.89,66.93 2520.95,67.82 2520.44,69.95 2520.44,69.95 2522.54,70.58 2522.78,71.94 2521.03,73.25 2521.03,73.25 2522.23,75.08 2521.54,76.28 2519.35,76.15 2519.35,76.15 2519.09,78.33 2517.80,78.80 2516.20,77.30 2516.20,77.30 2514.60,78.80 2513.31,78.33 2513.05,76.15 2513.05,76.15 2510.86,76.28 2510.17,75.08 2511.37,73.25 2511.37,73.25 2509.62,71.94 2509.86,70.58 2511.96,69.95 2511.96,69.95 2511.45,67.82 2512.51,66.93 2514.52,67.80" fill="#e2e2e2"/><circle cx="2516.2" cy="72.4" r="2.9" fill="#7a7a7a"/><rect x="2534" y="58.6" width="30" height="27.6" rx="4" fill="url(#gbtn)" stroke="#d6d6d6" stroke-width="1"/><circle cx="2547.3" cy="72.4" r="10" fill="url(#gcirc)"/><path d="M2549.5 67 V76.5 L2544 71.5 Z" fill="#f4f4f4"/><rect x="2554.00" y="88.00" width="6.00" height="1464.00" fill="url(#rstrip)" /><rect x="199.00" y="88.00" width="4.00" height="1464.00" fill="url(#lshade)" /><text x="211.60" y="281.80" font-size="57" fill="#ececec" textLength="425.00" lengthAdjust="spacingAndGlyphs" >Grayscale - Multi</text><text x="356.00" y="348.40" font-size="30" fill="#ececec" textLength="151.70" lengthAdjust="spacingAndGlyphs" >dE Formula:</text><rect x="519.50" y="319.50" width="209.50" height="36.20" fill="url(#ddbox)" stroke="#2a2a2a" stroke-width="1.2"/><text x="526.00" y="349.00" font-size="22" fill="#f0f0f0" textLength="48.00" lengthAdjust="spacingAndGlyphs" >2000</text><path d="M708.5 334.5 H721 L714.75 341.5 Z" fill="#111"/><text x="410.00" y="394.00" font-size="20" fill="#d9d9d9" textLength="111.80" lengthAdjust="spacingAndGlyphs" >DeltaE 2000</text><rect x="271.70" y="401.00" width="430.60" height="324.80" fill="#222222" /><line x1="328.80" y1="401.00" x2="328.80" y2="725.80" stroke="#8c8c8c" stroke-width="2" /><line x1="385.90" y1="401.00" x2="385.90" y2="725.80" stroke="#8c8c8c" stroke-width="2" /><line x1="443.00" y1="401.00" x2="443.00" y2="725.80" stroke="#8c8c8c" stroke-width="2" /><line x1="500.10" y1="401.00" x2="500.10" y2="725.80" stroke="#8c8c8c" stroke-width="2" /><line x1="557.20" y1="401.00" x2="557.20" y2="725.80" stroke="#8c8c8c" stroke-width="2" /><line x1="614.30" y1="401.00" x2="614.30" y2="725.80" stroke="#8c8c8c" stroke-width="2" /><line x1="671.40" y1="401.00" x2="671.40" y2="725.80" stroke="#8c8c8c" stroke-width="2" /><rect x="271.7" y="401" width="430.59999999999997" height="324.79999999999995" fill="none" stroke="#8c8c8c" stroke-width="2"/><line x1="263.20" y1="401.00" x2="270.20" y2="401.00" stroke="#d8d8d8" stroke-width="2" /><text x="263.20" y="423.76" font-size="21" fill="#d9d9d9" text-anchor="end" >100</text><rect x="272.20" y="405.30" width="68.77" height="20.93" fill="url(#bar100)" stroke="#000" stroke-width="2.1"/><line x1="263.20" y1="430.53" x2="270.20" y2="430.53" stroke="#d8d8d8" stroke-width="2" /><text x="263.20" y="453.29" font-size="21" fill="#d9d9d9" text-anchor="end" >90</text><rect x="272.20" y="434.83" width="48.20" height="20.93" fill="url(#bar90)" stroke="#000" stroke-width="2.1"/><line x1="263.20" y1="460.05" x2="270.20" y2="460.05" stroke="#d8d8d8" stroke-width="2" /><text x="263.20" y="482.82" font-size="21" fill="#d9d9d9" text-anchor="end" >80</text><rect x="272.20" y="464.35" width="58.16" height="20.93" fill="url(#bar80)" stroke="#000" stroke-width="2.1"/><line x1="263.20" y1="489.58" x2="270.20" y2="489.58" stroke="#d8d8d8" stroke-width="2" /><text x="263.20" y="512.35" font-size="21" fill="#d9d9d9" text-anchor="end" >70</text><rect x="272.20" y="493.88" width="37.56" height="20.93" fill="url(#bar70)" stroke="#000" stroke-width="2.1"/><line x1="263.20" y1="519.11" x2="270.20" y2="519.11" stroke="#d8d8d8" stroke-width="2" /><text x="263.20" y="541.87" font-size="21" fill="#d9d9d9" text-anchor="end" >60</text><rect x="272.20" y="523.41" width="35.17" height="20.93" fill="url(#bar60)" stroke="#000" stroke-width="2.1"/><line x1="263.20" y1="548.64" x2="270.20" y2="548.64" stroke="#d8d8d8" stroke-width="2" /><text x="263.20" y="571.40" font-size="21" fill="#d9d9d9" text-anchor="end" >50</text><rect x="272.20" y="552.94" width="27.86" height="20.93" fill="url(#bar50)" stroke="#000" stroke-width="2.1"/><line x1="263.20" y1="578.16" x2="270.20" y2="578.16" stroke="#d8d8d8" stroke-width="2" /><text x="263.20" y="600.93" font-size="21" fill="#d9d9d9" text-anchor="end" >40</text><rect x="272.20" y="582.46" width="14.23" height="20.93" fill="url(#bar40)" stroke="#000" stroke-width="2.1"/><line x1="263.20" y1="607.69" x2="270.20" y2="607.69" stroke="#d8d8d8" stroke-width="2" /><text x="263.20" y="630.45" font-size="21" fill="#d9d9d9" text-anchor="end" >30</text><rect x="272.20" y="611.99" width="35.79" height="20.93" fill="url(#bar30)" stroke="#000" stroke-width="2.1"/><line x1="263.20" y1="637.22" x2="270.20" y2="637.22" stroke="#d8d8d8" stroke-width="2" /><text x="263.20" y="659.98" font-size="21" fill="#d9d9d9" text-anchor="end" >20</text><rect x="272.20" y="641.52" width="22.30" height="20.93" fill="url(#bar20)" stroke="#000" stroke-width="2.1"/><line x1="263.20" y1="666.75" x2="270.20" y2="666.75" stroke="#d8d8d8" stroke-width="2" /><text x="263.20" y="689.51" font-size="21" fill="#d9d9d9" text-anchor="end" >10</text><rect x="272.20" y="671.05" width="21.68" height="20.93" fill="url(#bar10)" stroke="#000" stroke-width="2.1"/><line x1="263.20" y1="696.27" x2="270.20" y2="696.27" stroke="#d8d8d8" stroke-width="2" /><text x="263.20" y="719.04" font-size="21" fill="#d9d9d9" text-anchor="end" >0</text><line x1="264.70" y1="725.80" x2="270.70" y2="725.80" stroke="#cfcfcf" stroke-width="2" /><line x1="271.70" y1="401.00" x2="271.70" y2="725.80" stroke="#8c8c8c" stroke-width="2" /><line x1="271.70" y1="725.80" x2="271.70" y2="733.80" stroke="#cfcfcf" stroke-width="2" /><text x="271.70" y="755.50" font-size="20" fill="#d9d9d9" text-anchor="middle" >0</text><line x1="328.80" y1="725.80" x2="328.80" y2="733.80" stroke="#cfcfcf" stroke-width="2" /><text x="328.80" y="755.50" font-size="20" fill="#d9d9d9" text-anchor="middle" >2</text><line x1="385.90" y1="725.80" x2="385.90" y2="733.80" stroke="#cfcfcf" stroke-width="2" /><text x="385.90" y="755.50" font-size="20" fill="#d9d9d9" text-anchor="middle" >4</text><line x1="443.00" y1="725.80" x2="443.00" y2="733.80" stroke="#cfcfcf" stroke-width="2" /><text x="443.00" y="755.50" font-size="20" fill="#d9d9d9" text-anchor="middle" >6</text><line x1="500.10" y1="725.80" x2="500.10" y2="733.80" stroke="#cfcfcf" stroke-width="2" /><text x="500.10" y="755.50" font-size="20" fill="#d9d9d9" text-anchor="middle" >8</text><line x1="557.20" y1="725.80" x2="557.20" y2="733.80" stroke="#cfcfcf" stroke-width="2" /><text x="557.20" y="755.50" font-size="20" fill="#d9d9d9" text-anchor="middle" >10</text><line x1="614.30" y1="725.80" x2="614.30" y2="733.80" stroke="#cfcfcf" stroke-width="2" /><text x="614.30" y="755.50" font-size="20" fill="#d9d9d9" text-anchor="middle" >12</text><line x1="671.40" y1="725.80" x2="671.40" y2="733.80" stroke="#cfcfcf" stroke-width="2" /><text x="671.40" y="755.50" font-size="20" fill="#d9d9d9" text-anchor="middle" >14</text><text x="1124.00" y="269.30" font-size="21" fill="#d9d9d9" textLength="117.00" lengthAdjust="spacingAndGlyphs" >RGB Balance</text><rect x="800.70" y="275.70" width="806.30" height="450.00" fill="#222222" /><line x1="800.70" y1="322.60" x2="1607.00" y2="322.60" stroke="#8c8c8c" stroke-width="2" /><line x1="793.70" y1="322.60" x2="800.70" y2="322.60" stroke="#cfcfcf" stroke-width="2" /><text x="792.00" y="329.60" font-size="20" fill="#d9d9d9" text-anchor="end" >104</text><line x1="800.70" y1="412.80" x2="1607.00" y2="412.80" stroke="#8c8c8c" stroke-width="2" /><line x1="793.70" y1="412.80" x2="800.70" y2="412.80" stroke="#cfcfcf" stroke-width="2" /><text x="792.00" y="419.80" font-size="20" fill="#d9d9d9" text-anchor="end" >102</text><line x1="800.70" y1="503.00" x2="1607.00" y2="503.00" stroke="#8c8c8c" stroke-width="2" /><line x1="793.70" y1="503.00" x2="800.70" y2="503.00" stroke="#cfcfcf" stroke-width="2" /><text x="792.00" y="510.00" font-size="20" fill="#d9d9d9" text-anchor="end" >100</text><line x1="800.70" y1="593.20" x2="1607.00" y2="593.20" stroke="#8c8c8c" stroke-width="2" /><line x1="793.70" y1="593.20" x2="800.70" y2="593.20" stroke="#cfcfcf" stroke-width="2" /><text x="792.00" y="600.20" font-size="20" fill="#d9d9d9" text-anchor="end" >98</text><line x1="800.70" y1="683.40" x2="1607.00" y2="683.40" stroke="#8c8c8c" stroke-width="2" /><line x1="793.70" y1="683.40" x2="800.70" y2="683.40" stroke="#cfcfcf" stroke-width="2" /><text x="792.00" y="690.40" font-size="20" fill="#d9d9d9" text-anchor="end" >96</text><rect x="800.7" y="275.7" width="806.3" height="450.00000000000006" fill="none" stroke="#8c8c8c" stroke-width="2"/><line x1="800.70" y1="725.70" x2="800.70" y2="732.70" stroke="#cfcfcf" stroke-width="2" /><text x="800.70" y="754.50" font-size="20" fill="#d9d9d9" text-anchor="middle" >0</text><line x1="881.33" y1="725.70" x2="881.33" y2="732.70" stroke="#cfcfcf" stroke-width="2" /><text x="881.33" y="754.50" font-size="20" fill="#d9d9d9" text-anchor="middle" >10</text><line x1="961.96" y1="725.70" x2="961.96" y2="732.70" stroke="#cfcfcf" stroke-width="2" /><text x="961.96" y="754.50" font-size="20" fill="#d9d9d9" text-anchor="middle" >20</text><line x1="1042.59" y1="725.70" x2="1042.59" y2="732.70" stroke="#cfcfcf" stroke-width="2" /><text x="1042.59" y="754.50" font-size="20" fill="#d9d9d9" text-anchor="middle" >30</text><line x1="1123.22" y1="725.70" x2="1123.22" y2="732.70" stroke="#cfcfcf" stroke-width="2" /><text x="1123.22" y="754.50" font-size="20" fill="#d9d9d9" text-anchor="middle" >40</text><line x1="1203.85" y1="725.70" x2="1203.85" y2="732.70" stroke="#cfcfcf" stroke-width="2" /><text x="1203.85" y="754.50" font-size="20" fill="#d9d9d9" text-anchor="middle" >50</text><line x1="1284.48" y1="725.70" x2="1284.48" y2="732.70" stroke="#cfcfcf" stroke-width="2" /><text x="1284.48" y="754.50" font-size="20" fill="#d9d9d9" text-anchor="middle" >60</text><line x1="1365.11" y1="725.70" x2="1365.11" y2="732.70" stroke="#cfcfcf" stroke-width="2" /><text x="1365.11" y="754.50" font-size="20" fill="#d9d9d9" text-anchor="middle" >70</text><line x1="1445.74" y1="725.70" x2="1445.74" y2="732.70" stroke="#cfcfcf" stroke-width="2" /><text x="1445.74" y="754.50" font-size="20" fill="#d9d9d9" text-anchor="middle" >80</text><line x1="1526.37" y1="725.70" x2="1526.37" y2="732.70" stroke="#cfcfcf" stroke-width="2" /><text x="1526.37" y="754.50" font-size="20" fill="#d9d9d9" text-anchor="middle" >90</text><line x1="1607.00" y1="725.70" x2="1607.00" y2="732.70" stroke="#cfcfcf" stroke-width="2" /><text x="1607.00" y="754.50" font-size="20" fill="#d9d9d9" text-anchor="middle" >100</text><clipPath id="rgbclip"><rect x="800.7" y="275.7" width="806.3" height="450.00000000000006"/></clipPath><g clip-path="url(#rgbclip)"><polyline points="800.70,500.70 881.33,500.00 961.96,506.00 1042.59,512.50 1123.22,481.00 1203.85,492.50 1284.48,486.40 1365.11,484.30 1445.74,517.10 1526.37,519.60 1607.00,515.40" fill="none" stroke="#008a00" stroke-width="4" stroke-linejoin="round" /><polyline points="800.70,498.90 881.33,482.90 961.96,487.10 1042.59,478.60 1123.22,470.40 1203.85,463.60 1284.48,450.70 1365.11,444.30 1445.74,456.40 1526.37,463.20 1607.00,456.10" fill="none" stroke="#ff0000" stroke-width="4" stroke-linejoin="round" /><polyline points="800.70,499.60 881.33,485.70 961.96,492.50 1042.59,496.00 1123.22,481.80 1203.85,489.00 1284.48,480.40 1365.11,481.40 1445.74,501.40 1526.37,522.10 1607.00,478.20" fill="none" stroke="#0000ff" stroke-width="4" stroke-linejoin="round" /></g><text x="1706.00" y="268.60" font-size="21" fill="#d9d9d9" textLength="117.80" lengthAdjust="spacingAndGlyphs" >RGB Balance</text><rect x="1696.00" y="275.50" width="181.00" height="457.40" fill="#222222" /><line x1="1696.00" y1="323.80" x2="1877.00" y2="323.80" stroke="#8c8c8c" stroke-width="2" /><line x1="1689.00" y1="323.80" x2="1696.00" y2="323.80" stroke="#cfcfcf" stroke-width="2" /><text x="1687.00" y="330.80" font-size="20" fill="#d9d9d9" text-anchor="end" >104</text><line x1="1696.00" y1="415.40" x2="1877.00" y2="415.40" stroke="#8c8c8c" stroke-width="2" /><line x1="1689.00" y1="415.40" x2="1696.00" y2="415.40" stroke="#cfcfcf" stroke-width="2" /><text x="1687.00" y="422.40" font-size="20" fill="#d9d9d9" text-anchor="end" >102</text><line x1="1696.00" y1="507.00" x2="1877.00" y2="507.00" stroke="#8c8c8c" stroke-width="2" /><line x1="1689.00" y1="507.00" x2="1696.00" y2="507.00" stroke="#cfcfcf" stroke-width="2" /><text x="1687.00" y="514.00" font-size="20" fill="#d9d9d9" text-anchor="end" >100</text><line x1="1696.00" y1="598.60" x2="1877.00" y2="598.60" stroke="#8c8c8c" stroke-width="2" /><line x1="1689.00" y1="598.60" x2="1696.00" y2="598.60" stroke="#cfcfcf" stroke-width="2" /><text x="1687.00" y="605.60" font-size="20" fill="#d9d9d9" text-anchor="end" >98</text><line x1="1696.00" y1="690.20" x2="1877.00" y2="690.20" stroke="#8c8c8c" stroke-width="2" /><line x1="1689.00" y1="690.20" x2="1696.00" y2="690.20" stroke="#cfcfcf" stroke-width="2" /><text x="1687.00" y="697.20" font-size="20" fill="#d9d9d9" text-anchor="end" >96</text><rect x="1696" y="275.5" width="181" height="457.4" fill="none" stroke="#8c8c8c" stroke-width="2"/><rect x="1713.30" y="460.50" width="47.10" height="272.40" fill="url(#rbar)" stroke="#000" stroke-width="2.5"/><rect x="1762.00" y="519.70" width="46.00" height="213.20" fill="url(#gbar)" stroke="#000" stroke-width="2.5"/><rect x="1809.80" y="483.80" width="47.00" height="249.10" fill="url(#bbar)" stroke="#000" stroke-width="2.5"/><line x1="1696.00" y1="732.90" x2="1696.00" y2="739.90" stroke="#cfcfcf" stroke-width="2" /><line x1="1877.00" y1="732.90" x2="1877.00" y2="739.90" stroke="#cfcfcf" stroke-width="2" /><text x="1786.00" y="755.50" font-size="20" fill="#d9d9d9" text-anchor="middle" >100</text><text x="2145.40" y="268.50" font-size="21" fill="#d9d9d9" textLength="153.60" lengthAdjust="spacingAndGlyphs" >Gamma Log/Log</text><rect x="1959.90" y="276.20" width="560.70" height="449.30" fill="#222222" /><line x1="1959.90" y1="278.75" x2="2520.60" y2="278.75" stroke="#8c8c8c" stroke-width="2" /><line x1="1952.90" y1="278.75" x2="1959.90" y2="278.75" stroke="#cfcfcf" stroke-width="2" /><text x="1951.50" y="285.75" font-size="20" fill="#d9d9d9" text-anchor="end" >2.8</text><line x1="1959.90" y1="368.10" x2="2520.60" y2="368.10" stroke="#8c8c8c" stroke-width="2" /><line x1="1952.90" y1="368.10" x2="1959.90" y2="368.10" stroke="#cfcfcf" stroke-width="2" /><text x="1951.50" y="375.10" font-size="20" fill="#d9d9d9" text-anchor="end" >2.6</text><line x1="1959.90" y1="457.45" x2="2520.60" y2="457.45" stroke="#8c8c8c" stroke-width="2" /><line x1="1952.90" y1="457.45" x2="1959.90" y2="457.45" stroke="#cfcfcf" stroke-width="2" /><text x="1951.50" y="464.45" font-size="20" fill="#d9d9d9" text-anchor="end" >2.4</text><line x1="1959.90" y1="546.80" x2="2520.60" y2="546.80" stroke="#8c8c8c" stroke-width="2" /><line x1="1952.90" y1="546.80" x2="1959.90" y2="546.80" stroke="#cfcfcf" stroke-width="2" /><text x="1951.50" y="553.80" font-size="20" fill="#d9d9d9" text-anchor="end" >2.2</text><line x1="1959.90" y1="636.15" x2="2520.60" y2="636.15" stroke="#8c8c8c" stroke-width="2" /><line x1="1952.90" y1="636.15" x2="1959.90" y2="636.15" stroke="#cfcfcf" stroke-width="2" /><text x="1951.50" y="643.15" font-size="20" fill="#d9d9d9" text-anchor="end" >2</text><line x1="1959.90" y1="725.50" x2="2520.60" y2="725.50" stroke="#8c8c8c" stroke-width="2" /><line x1="1952.90" y1="725.50" x2="1959.90" y2="725.50" stroke="#cfcfcf" stroke-width="2" /><text x="1951.50" y="732.50" font-size="20" fill="#d9d9d9" text-anchor="end" >1.8</text><rect x="1959.9" y="276.2" width="560.6999999999998" height="449.3" fill="none" stroke="#8c8c8c" stroke-width="2"/><line x1="1959.90" y1="276.20" x2="2520.60" y2="276.20" stroke="#8c8c8c" stroke-width="3" /><line x1="1959.90" y1="725.50" x2="1959.90" y2="733.50" stroke="#cfcfcf" stroke-width="2" /><text x="1959.90" y="754.50" font-size="20" fill="#d9d9d9" text-anchor="middle" >0</text><line x1="2072.04" y1="725.50" x2="2072.04" y2="733.50" stroke="#cfcfcf" stroke-width="2" /><text x="2072.04" y="754.50" font-size="20" fill="#d9d9d9" text-anchor="middle" >20</text><line x1="2184.18" y1="725.50" x2="2184.18" y2="733.50" stroke="#cfcfcf" stroke-width="2" /><text x="2184.18" y="754.50" font-size="20" fill="#d9d9d9" text-anchor="middle" >40</text><line x1="2296.32" y1="725.50" x2="2296.32" y2="733.50" stroke="#cfcfcf" stroke-width="2" /><text x="2296.32" y="754.50" font-size="20" fill="#d9d9d9" text-anchor="middle" >60</text><line x1="2408.46" y1="725.50" x2="2408.46" y2="733.50" stroke="#cfcfcf" stroke-width="2" /><text x="2408.46" y="754.50" font-size="20" fill="#d9d9d9" text-anchor="middle" >80</text><line x1="2520.60" y1="725.50" x2="2520.60" y2="733.50" stroke="#cfcfcf" stroke-width="2" /><text x="2520.60" y="754.50" font-size="20" fill="#d9d9d9" text-anchor="middle" >100</text><clipPath id="gclip"><rect x="1959.9" y="276.2" width="560.6999999999998" height="449.3"/></clipPath><g clip-path="url(#gclip)"><polyline points="1959.90,958.79 2015.97,637.36 2072.04,583.17 2128.11,558.01 2184.18,556.99 2240.25,544.30 2296.32,544.88 2352.39,546.84 2408.46,515.62 2464.53,495.65 2520.60,513.34" fill="none" stroke="#8a8a8a" stroke-width="4" stroke-linejoin="round" /><polyline points="1976.72,789.96 1979.52,764.54 1982.33,744.09 1985.13,727.19 1987.94,712.91 1990.74,700.65 1993.54,689.98 1996.35,680.57 1999.15,672.20 2001.95,664.69 2004.76,657.90 2007.56,651.73 2010.36,646.08 2013.17,640.89 2015.97,636.10 2018.77,631.66 2021.58,627.52 2024.38,623.67 2027.18,620.06 2029.99,616.67 2032.79,613.48 2035.59,610.47 2038.40,607.62 2041.20,604.93 2044.01,602.37 2046.81,599.94 2049.61,597.63 2052.42,595.42 2055.22,593.31 2058.02,591.29 2060.83,589.36 2063.63,587.51 2066.43,585.73 2069.24,584.02 2072.04,582.38 2083.25,576.38 2094.47,571.16 2105.68,566.56 2116.90,562.47 2128.11,558.80 2139.32,555.48 2150.54,552.46 2161.75,549.70 2172.97,547.16 2184.18,544.81 2195.39,542.64 2206.61,540.62 2217.82,538.74 2229.04,536.97 2240.25,535.31 2251.46,533.75 2262.68,532.28 2273.89,530.89 2285.11,529.57 2296.32,528.32 2307.53,527.13 2318.75,526.00 2329.96,524.92 2341.18,523.89 2352.39,522.90 2363.60,521.96 2374.82,521.05 2386.03,520.18 2397.25,519.35 2408.46,518.54 2419.67,517.77 2430.89,517.03 2442.10,516.31 2453.32,515.61 2464.53,514.94 2475.74,514.29 2486.96,513.67 2498.17,513.06 2509.39,512.47 2520.60,511.90" fill="none" stroke="#ffff00" stroke-width="4" stroke-linejoin="round" /></g><text x="321.90" y="814.60" font-size="43" fill="#f0f0f0" textLength="302.70" lengthAdjust="spacingAndGlyphs" >Avg dE2000: 1.3</text><text x="903.00" y="814.60" font-size="43" fill="#f0f0f0" textLength="271.00" lengthAdjust="spacingAndGlyphs" >Avg CCT: 6428</text><text x="1340.90" y="814.60" font-size="43" fill="#f0f0f0" textLength="579.40" lengthAdjust="spacingAndGlyphs" >Contrast Ratio: 456573788231</text><text x="1999.00" y="814.60" font-size="43" fill="#f0f0f0" textLength="446.00" lengthAdjust="spacingAndGlyphs" >Average Gamma: 2.185</text><rect x="201.00" y="843.50" width="2359.00" height="184.50" fill="#000000" /><line x1="335.50" y1="843.50" x2="335.50" y2="1028.00" stroke="#0c0c0c" stroke-width="1" /><line x1="2539.50" y1="843.50" x2="2539.50" y2="1028.00" stroke="#0c0c0c" stroke-width="1" /><text x="0" y="0" font-size="16" fill="#f0f0f0" transform="translate(354 882.8) rotate(-90)" text-anchor="middle" textLength="50" lengthAdjust="spacingAndGlyphs">Actual</text><text x="0" y="0" font-size="16" fill="#f0f0f0" transform="translate(354 963.8) rotate(-90)" text-anchor="middle" textLength="50" lengthAdjust="spacingAndGlyphs">Target</text><rect x="368.00" y="852.00" width="169.00" height="142.00" fill="url(#sw0)" stroke="#ffffff" stroke-width="2"/><text x="452.30" y="1015.7" font-size="17.3" fill="#f4f4f4" text-anchor="middle" font-family="'Liberation Serif', serif">0</text><rect x="567.00" y="852.00" width="169.00" height="142.00" fill="url(#sw1)" stroke="#ffffff" stroke-width="2"/><text x="651.06" y="1015.7" font-size="17.3" fill="#f4f4f4" text-anchor="middle" font-family="'Liberation Serif', serif">10</text><rect x="765.00" y="852.00" width="169.00" height="142.00" fill="url(#sw2)" stroke="#ffffff" stroke-width="2"/><text x="849.82" y="1015.7" font-size="17.3" fill="#f4f4f4" text-anchor="middle" font-family="'Liberation Serif', serif">20</text><rect x="964.00" y="852.00" width="169.00" height="142.00" fill="url(#sw3)" stroke="#ffffff" stroke-width="2"/><text x="1048.58" y="1015.7" font-size="17.3" fill="#f4f4f4" text-anchor="middle" font-family="'Liberation Serif', serif">30</text><rect x="1163.00" y="852.00" width="169.00" height="142.00" fill="url(#sw4)" stroke="#ffffff" stroke-width="2"/><text x="1247.34" y="1015.7" font-size="17.3" fill="#f4f4f4" text-anchor="middle" font-family="'Liberation Serif', serif">40</text><rect x="1362.00" y="852.00" width="169.00" height="142.00" fill="url(#sw5)" stroke="#ffffff" stroke-width="2"/><text x="1446.10" y="1015.7" font-size="17.3" fill="#f4f4f4" text-anchor="middle" font-family="'Liberation Serif', serif">50</text><rect x="1560.00" y="852.00" width="169.00" height="142.00" fill="url(#sw6)" stroke="#ffffff" stroke-width="2"/><text x="1644.86" y="1015.7" font-size="17.3" fill="#f4f4f4" text-anchor="middle" font-family="'Liberation Serif', serif">60</text><rect x="1759.00" y="852.00" width="169.00" height="142.00" fill="url(#sw7)" stroke="#ffffff" stroke-width="2"/><text x="1843.62" y="1015.7" font-size="17.3" fill="#f4f4f4" text-anchor="middle" font-family="'Liberation Serif', serif">70</text><rect x="1958.00" y="852.00" width="169.00" height="142.00" fill="url(#sw8)" stroke="#ffffff" stroke-width="2"/><text x="2042.38" y="1015.7" font-size="17.3" fill="#f4f4f4" text-anchor="middle" font-family="'Liberation Serif', serif">80</text><rect x="2157.00" y="852.00" width="169.00" height="142.00" fill="url(#sw9)" stroke="#ffffff" stroke-width="2"/><text x="2241.14" y="1015.7" font-size="17.3" fill="#f4f4f4" text-anchor="middle" font-family="'Liberation Serif', serif">90</text><rect x="2355.00" y="852.00" width="169.00" height="142.00" fill="url(#sw10)" stroke="#ffffff" stroke-width="2"/><text x="2439.90" y="1015.7" font-size="17.3" fill="#f4f4f4" text-anchor="middle" font-family="'Liberation Serif', serif">100</text><text x="230.90" y="1123.30" font-size="40" fill="#f0f0f0" textLength="309.00" lengthAdjust="spacingAndGlyphs" >Current Reading</text><text x="230.90" y="1181.70" font-size="35.5" fill="#f0f0f0" textLength="143.50" lengthAdjust="spacingAndGlyphs" >x: 0.3137</text><text x="442.00" y="1181.70" font-size="35.5" fill="#f0f0f0" textLength="146.00" lengthAdjust="spacingAndGlyphs" >y: 0.3268</text><text x="230.90" y="1230.00" font-size="35.5" fill="#f0f0f0" textLength="156.00" lengthAdjust="spacingAndGlyphs" >u&#x27;: 0.1994</text><text x="442.00" y="1230.00" font-size="35.5" fill="#f0f0f0" textLength="155.00" lengthAdjust="spacingAndGlyphs" >v&#x27;: 0.4673</text><text x="230.90" y="1278.00" font-size="35.5" fill="#f0f0f0" textLength="265.00" lengthAdjust="spacingAndGlyphs" >cd/m²: 456.5738</text><text x="230.90" y="1326.70" font-size="35.5" fill="#f0f0f0" textLength="218.00" lengthAdjust="spacingAndGlyphs" >ΔE 2000: 2.46</text><text x="816.40" y="1074.70" font-size="19" fill="#d9d9d9" textLength="106.60" lengthAdjust="spacingAndGlyphs" >CIE 1931 xy</text><clipPath id="cieclip"><rect x="716" y="1082.4" width="356.4000000000001" height="234.39999999999986"/></clipPath><filter id="vblur" x="-5%" y="-10%" width="110%" height="120%"><feGaussianBlur stdDeviation="0 4"/></filter><g clip-path="url(#cieclip)"><g filter="url(#vblur)"><rect x="711.00" y="1067.40" width="366.40" height="8.50" fill="url(#cie0)" /><rect x="711.00" y="1075.40" width="366.40" height="8.50" fill="url(#cie1)" /><rect x="711.00" y="1083.40" width="366.40" height="8.50" fill="url(#cie2)" /><rect x="711.00" y="1091.40" width="366.40" height="8.50" fill="url(#cie3)" /><rect x="711.00" y="1099.40" width="366.40" height="8.50" fill="url(#cie4)" /><rect x="711.00" y="1107.40" width="366.40" height="8.50" fill="url(#cie5)" /><rect x="711.00" y="1115.40" width="366.40" height="8.50" fill="url(#cie6)" /><rect x="711.00" y="1123.40" width="366.40" height="8.50" fill="url(#cie7)" /><rect x="711.00" y="1131.40" width="366.40" height="8.50" fill="url(#cie8)" /><rect x="711.00" y="1139.40" width="366.40" height="8.50" fill="url(#cie9)" /><rect x="711.00" y="1147.40" width="366.40" height="8.50" fill="url(#cie10)" /><rect x="711.00" y="1155.40" width="366.40" height="8.50" fill="url(#cie11)" /><rect x="711.00" y="1163.40" width="366.40" height="8.50" fill="url(#cie12)" /><rect x="711.00" y="1171.40" width="366.40" height="8.50" fill="url(#cie13)" /><rect x="711.00" y="1179.40" width="366.40" height="8.50" fill="url(#cie14)" /><rect x="711.00" y="1187.40" width="366.40" height="8.50" fill="url(#cie15)" /><rect x="711.00" y="1195.40" width="366.40" height="8.50" fill="url(#cie16)" /><rect x="711.00" y="1203.40" width="366.40" height="8.50" fill="url(#cie17)" /><rect x="711.00" y="1211.40" width="366.40" height="8.50" fill="url(#cie18)" /><rect x="711.00" y="1219.40" width="366.40" height="8.50" fill="url(#cie19)" /><rect x="711.00" y="1227.40" width="366.40" height="8.50" fill="url(#cie20)" /><rect x="711.00" y="1235.40" width="366.40" height="8.50" fill="url(#cie21)" /><rect x="711.00" y="1243.40" width="366.40" height="8.50" fill="url(#cie22)" /><rect x="711.00" y="1251.40" width="366.40" height="8.50" fill="url(#cie23)" /><rect x="711.00" y="1259.40" width="366.40" height="8.50" fill="url(#cie24)" /><rect x="711.00" y="1267.40" width="366.40" height="8.50" fill="url(#cie25)" /><rect x="711.00" y="1275.40" width="366.40" height="8.50" fill="url(#cie26)" /><rect x="711.00" y="1283.40" width="366.40" height="8.50" fill="url(#cie27)" /><rect x="711.00" y="1291.40" width="366.40" height="8.50" fill="url(#cie28)" /><rect x="711.00" y="1299.40" width="366.40" height="8.50" fill="url(#cie29)" /><rect x="711.00" y="1307.40" width="366.40" height="8.50" fill="url(#cie30)" /><rect x="711.00" y="1315.40" width="366.40" height="8.50" fill="url(#cie31)" /><rect x="711.00" y="1323.40" width="366.40" height="8.50" fill="url(#cie32)" /><rect x="711.00" y="1331.40" width="366.40" height="8.50" fill="url(#cie33)" /></g><polyline points="1235.26,1036.38 1210.82,1048.08 1187.47,1059.53 1165.15,1070.73 1143.78,1081.66 1123.34,1092.34 1103.76,1102.76 1085.01,1112.93 1067.03,1122.84 1049.78,1132.50 1033.23,1141.91 1017.35,1151.09 1002.09,1160.02 987.42,1168.72 973.32,1177.20 959.75,1185.45 946.70,1193.49 934.12,1201.32 922.01,1208.94 910.34,1216.36 899.08,1223.59 888.22,1230.62 877.73,1237.48 867.61,1244.16 857.83,1250.66 848.38,1257.00 839.25,1263.18 830.41,1269.19 821.86,1275.06 813.58,1280.78 805.57,1286.35 797.80,1291.78 790.28,1297.08 782.99,1302.25 775.91,1307.29 769.05,1312.21 762.39,1317.01 755.93,1321.70 749.65,1326.27 743.55,1330.73 737.63,1335.09 731.87,1339.35 726.27,1343.50 720.82,1347.57 715.52,1351.53 710.36,1355.41" fill="none" stroke="#000" stroke-width="3.4" stroke-linejoin="round" /><circle cx="1040.10" cy="1178.29" r="6.3" fill="#000"/><rect x="883.92" y="1189.00" width="19" height="19" fill="none" stroke="#000" stroke-width="2"/><circle cx="899.83" cy="1215.89" r="6" fill="rgb(26,26,26)" stroke="#000" stroke-width="1.2"/><circle cx="899.83" cy="1209.78" r="6" fill="rgb(51,51,51)" stroke="#000" stroke-width="1.2"/><circle cx="906.24" cy="1209.31" r="6" fill="rgb(76,76,76)" stroke="#000" stroke-width="1.2"/><circle cx="899.83" cy="1198.03" r="6" fill="rgb(102,102,102)" stroke="#000" stroke-width="1.2"/><circle cx="905.53" cy="1200.38" r="6" fill="rgb(128,128,128)" stroke="#000" stroke-width="1.2"/><circle cx="906.24" cy="1201.32" r="6" fill="rgb(153,153,153)" stroke="#000" stroke-width="1.2"/><circle cx="906.95" cy="1199.44" r="6" fill="rgb(178,178,178)" stroke="#000" stroke-width="1.2"/><circle cx="909.09" cy="1204.14" r="6" fill="rgb(204,204,204)" stroke="#000" stroke-width="1.2"/><circle cx="911.94" cy="1197.56" r="6" fill="rgb(230,230,230)" stroke="#000" stroke-width="1.2"/><circle cx="900.54" cy="1208.84" r="6" fill="rgb(255,255,255)" stroke="#000" stroke-width="1.2"/></g><rect x="716" y="1082.4" width="356.4000000000001" height="234.39999999999986" fill="none" stroke="#8c8c8c" stroke-width="2"/><line x1="710.00" y1="1149.60" x2="716.00" y2="1149.60" stroke="#cfcfcf" stroke-width="1.5" /><text x="706.80" y="1156.60" font-size="20" fill="#d9d9d9" text-anchor="end" textLength="40.00" lengthAdjust="spacingAndGlyphs" >0.34</text><line x1="710.00" y1="1244.50" x2="716.00" y2="1244.50" stroke="#cfcfcf" stroke-width="1.5" /><text x="706.80" y="1251.50" font-size="20" fill="#d9d9d9" text-anchor="end" textLength="40.00" lengthAdjust="spacingAndGlyphs" >0.32</text><line x1="731.60" y1="1316.80" x2="731.60" y2="1322.80" stroke="#cfcfcf" stroke-width="1.5" /><text x="731.60" y="1346.80" font-size="20" fill="#d9d9d9" text-anchor="middle" textLength="39.00" lengthAdjust="spacingAndGlyphs" >0.29</text><line x1="802.90" y1="1316.80" x2="802.90" y2="1322.80" stroke="#cfcfcf" stroke-width="1.5" /><text x="802.90" y="1346.80" font-size="20" fill="#d9d9d9" text-anchor="middle" textLength="29.00" lengthAdjust="spacingAndGlyphs" >0.3</text><line x1="874.00" y1="1316.80" x2="874.00" y2="1322.80" stroke="#cfcfcf" stroke-width="1.5" /><text x="874.00" y="1346.80" font-size="20" fill="#d9d9d9" text-anchor="middle" textLength="39.00" lengthAdjust="spacingAndGlyphs" >0.31</text><line x1="945.30" y1="1316.80" x2="945.30" y2="1322.80" stroke="#cfcfcf" stroke-width="1.5" /><text x="945.30" y="1346.80" font-size="20" fill="#d9d9d9" text-anchor="middle" textLength="39.00" lengthAdjust="spacingAndGlyphs" >0.32</text><line x1="1016.50" y1="1316.80" x2="1016.50" y2="1322.80" stroke="#cfcfcf" stroke-width="1.5" /><text x="1016.50" y="1346.80" font-size="20" fill="#d9d9d9" text-anchor="middle" textLength="39.00" lengthAdjust="spacingAndGlyphs" >0.33</text><rect x="1085.30" y="1039.00" width="1198.90" height="301.00" fill="#1a1a1a" /><rect x="1086.30" y="1040.00" width="1196.90" height="37.00" fill="url(#thead)" /><text x="1306.50" y="1065.60" font-size="17.5" fill="#f0f0f0" text-anchor="middle" >0</text><text x="1399.60" y="1065.60" font-size="17.5" fill="#f0f0f0" text-anchor="middle" >10</text><text x="1492.70" y="1065.60" font-size="17.5" fill="#f0f0f0" text-anchor="middle" >20</text><text x="1585.80" y="1065.60" font-size="17.5" fill="#f0f0f0" text-anchor="middle" >30</text><text x="1678.90" y="1065.60" font-size="17.5" fill="#f0f0f0" text-anchor="middle" >40</text><text x="1771.20" y="1065.60" font-size="17.5" fill="#f0f0f0" text-anchor="middle" >50</text><text x="1864.30" y="1065.60" font-size="17.5" fill="#f0f0f0" text-anchor="middle" >60</text><text x="1957.40" y="1065.60" font-size="17.5" fill="#f0f0f0" text-anchor="middle" >70</text><text x="2050.10" y="1065.60" font-size="17.5" fill="#f0f0f0" text-anchor="middle" >80</text><text x="2143.20" y="1065.60" font-size="17.5" fill="#f0f0f0" text-anchor="middle" >90</text><text x="2236.00" y="1065.60" font-size="17.5" fill="#f0f0f0" text-anchor="middle" >100</text><rect x="1086.30" y="1077.00" width="1196.90" height="32.81" fill="#3d3d3d" /><text x="1101.60" y="1100.80" font-size="20" fill="#f2f2f2" font-weight="bold" textLength="67.20" lengthAdjust="spacingAndGlyphs" >x: CIE31</text><text x="1264.70" y="1100.80" font-size="20" fill="#f0f0f0" textLength="52.40" lengthAdjust="spacingAndGlyphs" >0.3333</text><text x="1358.00" y="1100.80" font-size="20" fill="#f0f0f0" textLength="52.40" lengthAdjust="spacingAndGlyphs" >0.3136</text><text x="1451.20" y="1100.80" font-size="20" fill="#f0f0f0" textLength="52.40" lengthAdjust="spacingAndGlyphs" >0.3136</text><text x="1543.80" y="1100.80" font-size="20" fill="#f0f0f0" textLength="52.40" lengthAdjust="spacingAndGlyphs" >0.3145</text><text x="1636.60" y="1100.80" font-size="20" fill="#f0f0f0" textLength="52.40" lengthAdjust="spacingAndGlyphs" >0.3136</text><text x="1729.70" y="1100.80" font-size="20" fill="#f0f0f0" textLength="52.40" lengthAdjust="spacingAndGlyphs" >0.3144</text><text x="1823.00" y="1100.80" font-size="20" fill="#f0f0f0" textLength="52.40" lengthAdjust="spacingAndGlyphs" >0.3145</text><text x="1916.00" y="1100.80" font-size="20" fill="#f0f0f0" textLength="52.40" lengthAdjust="spacingAndGlyphs" >0.3146</text><text x="2008.70" y="1100.80" font-size="20" fill="#f0f0f0" textLength="52.40" lengthAdjust="spacingAndGlyphs" >0.3149</text><text x="2101.80" y="1100.80" font-size="20" fill="#f0f0f0" textLength="52.40" lengthAdjust="spacingAndGlyphs" >0.3153</text><text x="2194.30" y="1100.80" font-size="20" fill="#f0f0f0" textLength="52.40" lengthAdjust="spacingAndGlyphs" >0.3137</text><rect x="1086.30" y="1109.81" width="1196.90" height="32.81" fill="#808080" /><text x="1101.60" y="1133.61" font-size="20" fill="#f2f2f2" font-weight="bold" textLength="67.20" lengthAdjust="spacingAndGlyphs" >y: CIE31</text><text x="1264.70" y="1133.61" font-size="20" fill="#f0f0f0" textLength="52.40" lengthAdjust="spacingAndGlyphs" >0.3333</text><text x="1358.00" y="1133.61" font-size="20" fill="#f0f0f0" textLength="52.40" lengthAdjust="spacingAndGlyphs" >0.3253</text><text x="1451.20" y="1133.61" font-size="20" fill="#f0f0f0" textLength="52.40" lengthAdjust="spacingAndGlyphs" >0.3266</text><text x="1543.80" y="1133.61" font-size="20" fill="#f0f0f0" textLength="52.40" lengthAdjust="spacingAndGlyphs" >0.3267</text><text x="1636.60" y="1133.61" font-size="20" fill="#f0f0f0" textLength="52.40" lengthAdjust="spacingAndGlyphs" >0.3291</text><text x="1729.70" y="1133.61" font-size="20" fill="#f0f0f0" textLength="52.40" lengthAdjust="spacingAndGlyphs" >0.3286</text><text x="1823.00" y="1133.61" font-size="20" fill="#f0f0f0" textLength="52.40" lengthAdjust="spacingAndGlyphs" >0.3284</text><text x="1916.00" y="1133.61" font-size="20" fill="#f0f0f0" textLength="52.40" lengthAdjust="spacingAndGlyphs" >0.3288</text><text x="2008.70" y="1133.61" font-size="20" fill="#f0f0f0" textLength="52.40" lengthAdjust="spacingAndGlyphs" >0.3278</text><text x="2101.80" y="1133.61" font-size="20" fill="#f0f0f0" textLength="52.40" lengthAdjust="spacingAndGlyphs" >0.3292</text><text x="2194.30" y="1133.61" font-size="20" fill="#f0f0f0" textLength="52.40" lengthAdjust="spacingAndGlyphs" >0.3268</text><rect x="1086.30" y="1142.62" width="1196.90" height="32.81" fill="#3d3d3d" /><text x="1101.60" y="1166.42" font-size="20" fill="#f2f2f2" font-weight="bold" textLength="11.50" lengthAdjust="spacingAndGlyphs" >Y</text><text x="1264.70" y="1166.42" font-size="20" fill="#f0f0f0" textLength="52.40" lengthAdjust="spacingAndGlyphs" >0.0000</text><text x="1358.00" y="1166.42" font-size="20" fill="#f0f0f0" textLength="52.40" lengthAdjust="spacingAndGlyphs" >4.7756</text><text x="1451.20" y="1166.42" font-size="20" fill="#f0f0f0" textLength="61.90" lengthAdjust="spacingAndGlyphs" >15.0902</text><text x="1543.80" y="1166.42" font-size="20" fill="#f0f0f0" textLength="61.90" lengthAdjust="spacingAndGlyphs" >32.8164</text><text x="1636.60" y="1166.42" font-size="20" fill="#f0f0f0" textLength="61.90" lengthAdjust="spacingAndGlyphs" >62.1020</text><text x="1729.70" y="1166.42" font-size="20" fill="#f0f0f0" textLength="61.90" lengthAdjust="spacingAndGlyphs" >99.8385</text><text x="1823.00" y="1166.42" font-size="20" fill="#f0f0f0" textLength="71.40" lengthAdjust="spacingAndGlyphs" >148.0776</text><text x="1916.00" y="1166.42" font-size="20" fill="#f0f0f0" textLength="71.40" lengthAdjust="spacingAndGlyphs" >207.0401</text><text x="2008.70" y="1166.42" font-size="20" fill="#f0f0f0" textLength="71.40" lengthAdjust="spacingAndGlyphs" >275.1355</text><text x="2101.80" y="1166.42" font-size="20" fill="#f0f0f0" textLength="71.40" lengthAdjust="spacingAndGlyphs" >359.5791</text><text x="2194.30" y="1166.42" font-size="20" fill="#f0f0f0" textLength="71.40" lengthAdjust="spacingAndGlyphs" >456.5738</text><rect x="1086.30" y="1175.44" width="1196.90" height="32.81" fill="#808080" /><text x="1101.60" y="1199.24" font-size="20" fill="#f2f2f2" font-weight="bold" textLength="71.00" lengthAdjust="spacingAndGlyphs" >Target Y</text><text x="1264.70" y="1199.24" font-size="20" fill="#f0f0f0" textLength="52.40" lengthAdjust="spacingAndGlyphs" >0.0000</text><text x="1358.00" y="1199.24" font-size="20" fill="#f0f0f0" textLength="52.40" lengthAdjust="spacingAndGlyphs" >4.7163</text><text x="1451.20" y="1199.24" font-size="20" fill="#f0f0f0" textLength="61.90" lengthAdjust="spacingAndGlyphs" >15.1148</text><text x="1543.80" y="1199.24" font-size="20" fill="#f0f0f0" textLength="61.90" lengthAdjust="spacingAndGlyphs" >32.9974</text><text x="1636.60" y="1199.24" font-size="20" fill="#f0f0f0" textLength="61.90" lengthAdjust="spacingAndGlyphs" >60.6642</text><text x="1729.70" y="1199.24" font-size="20" fill="#f0f0f0" textLength="61.90" lengthAdjust="spacingAndGlyphs" >98.5562</text><text x="1823.00" y="1199.24" font-size="20" fill="#f0f0f0" textLength="71.40" lengthAdjust="spacingAndGlyphs" >145.4401</text><text x="1916.00" y="1199.24" font-size="20" fill="#f0f0f0" textLength="71.40" lengthAdjust="spacingAndGlyphs" >203.2672</text><text x="2008.70" y="1199.24" font-size="20" fill="#f0f0f0" textLength="71.40" lengthAdjust="spacingAndGlyphs" >275.6917</text><text x="2101.80" y="1199.24" font-size="20" fill="#f0f0f0" textLength="71.40" lengthAdjust="spacingAndGlyphs" >361.2859</text><text x="2194.30" y="1199.24" font-size="20" fill="#f0f0f0" textLength="71.40" lengthAdjust="spacingAndGlyphs" >456.5738</text><rect x="1086.30" y="1208.25" width="1196.90" height="32.81" fill="#3d3d3d" /><text x="1101.60" y="1232.05" font-size="20" fill="#f2f2f2" font-weight="bold" textLength="143.40" lengthAdjust="spacingAndGlyphs" >Gamma Log/Log</text><text x="1264.70" y="1232.05" font-size="20" fill="#f0f0f0" textLength="52.40" lengthAdjust="spacingAndGlyphs" >1.2778</text><text x="1358.00" y="1232.05" font-size="20" fill="#f0f0f0" textLength="52.40" lengthAdjust="spacingAndGlyphs" >1.9973</text><text x="1451.20" y="1232.05" font-size="20" fill="#f0f0f0" textLength="52.40" lengthAdjust="spacingAndGlyphs" >2.1186</text><text x="1543.80" y="1232.05" font-size="20" fill="#f0f0f0" textLength="52.40" lengthAdjust="spacingAndGlyphs" >2.1749</text><text x="1636.60" y="1232.05" font-size="20" fill="#f0f0f0" textLength="52.40" lengthAdjust="spacingAndGlyphs" >2.1772</text><text x="1729.70" y="1232.05" font-size="20" fill="#f0f0f0" textLength="52.40" lengthAdjust="spacingAndGlyphs" >2.2056</text><text x="1823.00" y="1232.05" font-size="20" fill="#f0f0f0" textLength="52.40" lengthAdjust="spacingAndGlyphs" >2.2043</text><text x="1916.00" y="1232.05" font-size="20" fill="#f0f0f0" textLength="52.40" lengthAdjust="spacingAndGlyphs" >2.1999</text><text x="2008.70" y="1232.05" font-size="20" fill="#f0f0f0" textLength="52.40" lengthAdjust="spacingAndGlyphs" >2.2698</text><text x="2101.80" y="1232.05" font-size="20" fill="#f0f0f0" textLength="52.40" lengthAdjust="spacingAndGlyphs" >2.3145</text><text x="2194.30" y="1232.05" font-size="20" fill="#f0f0f0" textLength="52.40" lengthAdjust="spacingAndGlyphs" >2.2749</text><rect x="1086.30" y="1241.06" width="1196.90" height="32.81" fill="#808080" /><text x="1101.60" y="1264.86" font-size="20" fill="#f2f2f2" font-weight="bold" textLength="32.50" lengthAdjust="spacingAndGlyphs" >CCT</text><text x="1264.70" y="1264.86" font-size="20" fill="#f0f0f0" textLength="80.90" lengthAdjust="spacingAndGlyphs" >5456.0000</text><text x="1358.00" y="1264.86" font-size="20" fill="#f0f0f0" textLength="80.90" lengthAdjust="spacingAndGlyphs" >6483.0000</text><text x="1451.20" y="1264.86" font-size="20" fill="#f0f0f0" textLength="80.90" lengthAdjust="spacingAndGlyphs" >6473.0000</text><text x="1543.80" y="1264.86" font-size="20" fill="#f0f0f0" textLength="80.90" lengthAdjust="spacingAndGlyphs" >6420.0000</text><text x="1636.60" y="1264.86" font-size="20" fill="#f0f0f0" textLength="80.90" lengthAdjust="spacingAndGlyphs" >6453.0000</text><text x="1729.70" y="1264.86" font-size="20" fill="#f0f0f0" textLength="80.90" lengthAdjust="spacingAndGlyphs" >6414.0000</text><text x="1823.00" y="1264.86" font-size="20" fill="#f0f0f0" textLength="80.90" lengthAdjust="spacingAndGlyphs" >6412.0000</text><text x="1916.00" y="1264.86" font-size="20" fill="#f0f0f0" textLength="80.90" lengthAdjust="spacingAndGlyphs" >6400.0000</text><text x="2008.70" y="1264.86" font-size="20" fill="#f0f0f0" textLength="80.90" lengthAdjust="spacingAndGlyphs" >6395.0000</text><text x="2101.80" y="1264.86" font-size="20" fill="#f0f0f0" textLength="80.90" lengthAdjust="spacingAndGlyphs" >6364.0000</text><text x="2194.30" y="1264.86" font-size="20" fill="#f0f0f0" textLength="80.90" lengthAdjust="spacingAndGlyphs" >6465.0000</text><rect x="1086.30" y="1273.88" width="1196.90" height="32.81" fill="#3d3d3d" /><text x="1101.60" y="1297.67" font-size="20" fill="#f2f2f2" font-weight="bold" textLength="69.70" lengthAdjust="spacingAndGlyphs" >ΔE 2000</text><text x="1264.70" y="1297.67" font-size="20" fill="#f0f0f0" textLength="52.40" lengthAdjust="spacingAndGlyphs" >0.0000</text><text x="1358.00" y="1297.67" font-size="20" fill="#f0f0f0" textLength="52.40" lengthAdjust="spacingAndGlyphs" >0.8118</text><text x="1451.20" y="1297.67" font-size="20" fill="#f0f0f0" textLength="52.40" lengthAdjust="spacingAndGlyphs" >0.8335</text><text x="1543.80" y="1297.67" font-size="20" fill="#f0f0f0" textLength="52.40" lengthAdjust="spacingAndGlyphs" >1.3061</text><text x="1636.60" y="1297.67" font-size="20" fill="#f0f0f0" textLength="52.40" lengthAdjust="spacingAndGlyphs" >0.5511</text><text x="1729.70" y="1297.67" font-size="20" fill="#f0f0f0" textLength="52.40" lengthAdjust="spacingAndGlyphs" >1.0282</text><rect x="1818.60" y="1274.80" width="92.00" height="29.70" fill="#efefef" stroke="#ffffff" stroke-width="1"/><text x="1823.00" y="1297.67" font-size="20" fill="#111111" textLength="52.40" lengthAdjust="spacingAndGlyphs" >1.2845</text><text x="1916.00" y="1297.67" font-size="20" fill="#f0f0f0" textLength="52.40" lengthAdjust="spacingAndGlyphs" >1.3680</text><text x="2008.70" y="1297.67" font-size="20" fill="#f0f0f0" textLength="52.40" lengthAdjust="spacingAndGlyphs" >2.0896</text><text x="2101.80" y="1297.67" font-size="20" fill="#f0f0f0" textLength="52.40" lengthAdjust="spacingAndGlyphs" >1.7408</text><text x="2194.30" y="1297.67" font-size="20" fill="#f0f0f0" textLength="52.40" lengthAdjust="spacingAndGlyphs" >2.4614</text><rect x="1086.30" y="1306.69" width="1196.90" height="32.81" fill="#808080" /><text x="1101.60" y="1330.49" font-size="20" fill="#f2f2f2" font-weight="bold" textLength="55.40" lengthAdjust="spacingAndGlyphs" >ΔE ITP</text><text x="1264.70" y="1330.49" font-size="20" fill="#f0f0f0" textLength="52.40" lengthAdjust="spacingAndGlyphs" >0.0061</text><text x="1358.00" y="1330.49" font-size="20" fill="#f0f0f0" textLength="52.40" lengthAdjust="spacingAndGlyphs" >1.5942</text><text x="1451.20" y="1330.49" font-size="20" fill="#f0f0f0" textLength="52.40" lengthAdjust="spacingAndGlyphs" >1.2220</text><text x="1543.80" y="1330.49" font-size="20" fill="#f0f0f0" textLength="52.40" lengthAdjust="spacingAndGlyphs" >1.7861</text><text x="1636.60" y="1330.49" font-size="20" fill="#f0f0f0" textLength="52.40" lengthAdjust="spacingAndGlyphs" >1.7310</text><text x="1729.70" y="1330.49" font-size="20" fill="#f0f0f0" textLength="52.40" lengthAdjust="spacingAndGlyphs" >1.5537</text><text x="1823.00" y="1330.49" font-size="20" fill="#f0f0f0" textLength="52.40" lengthAdjust="spacingAndGlyphs" >1.9074</text><text x="1916.00" y="1330.49" font-size="20" fill="#f0f0f0" textLength="52.40" lengthAdjust="spacingAndGlyphs" >1.9802</text><text x="2008.70" y="1330.49" font-size="20" fill="#f0f0f0" textLength="52.40" lengthAdjust="spacingAndGlyphs" >1.8346</text><text x="2101.80" y="1330.49" font-size="20" fill="#f0f0f0" textLength="52.40" lengthAdjust="spacingAndGlyphs" >1.7577</text><text x="2194.30" y="1330.49" font-size="20" fill="#f0f0f0" textLength="52.40" lengthAdjust="spacingAndGlyphs" >1.5767</text><rect x="201.00" y="1490.00" width="2359.00" height="62.00" fill="url(#pbar)" /><path d="M201.5 1547.5 V1494 Q201.5 1490 205.5 1490 H347.0 Q351.0 1490 351.0 1494 V1547.5 Q351.0 1551.5 347.0 1551.5 H205.5 Q201.5 1551.5 201.5 1547.5 Z" fill="url(#pbtn)"/><rect x="206.5" y="1495" width="139.5" height="36" rx="3.5" fill="#000000" stroke="#555" stroke-width="0.8"/><text x="276.25" y="1546.50" font-size="11" fill="#333333" text-anchor="middle" >0</text><path d="M353.45 1547.5 V1494 Q353.45 1490 357.45 1490 H498.95 Q502.95 1490 502.95 1494 V1547.5 Q502.95 1551.5 498.95 1551.5 H357.45 Q353.45 1551.5 353.45 1547.5 Z" fill="url(#pbtn)"/><rect x="358.45" y="1495" width="139.5" height="36" rx="3.5" fill="#1c1c1c" stroke="#555" stroke-width="0.8"/><text x="428.20" y="1546.50" font-size="11" fill="#333333" text-anchor="middle" >10</text><path d="M505.4 1547.5 V1494 Q505.4 1490 509.4 1490 H650.9 Q654.9 1490 654.9 1494 V1547.5 Q654.9 1551.5 650.9 1551.5 H509.4 Q505.4 1551.5 505.4 1547.5 Z" fill="url(#pbtn)"/><rect x="510.4" y="1495" width="139.5" height="36" rx="3.5" fill="#333333" stroke="#555" stroke-width="0.8"/><text x="580.15" y="1546.50" font-size="11" fill="#333333" text-anchor="middle" >20</text><path d="M657.3499999999999 1547.5 V1494 Q657.3499999999999 1490 661.3499999999999 1490 H802.8499999999999 Q806.8499999999999 1490 806.8499999999999 1494 V1547.5 Q806.8499999999999 1551.5 802.8499999999999 1551.5 H661.3499999999999 Q657.3499999999999 1551.5 657.3499999999999 1547.5 Z" fill="url(#pbtn)"/><rect x="662.3499999999999" y="1495" width="139.5" height="36" rx="3.5" fill="#4b4b4b" stroke="#555" stroke-width="0.8"/><text x="732.10" y="1546.50" font-size="11" fill="#333333" text-anchor="middle" >30</text><path d="M809.3 1547.5 V1494 Q809.3 1490 813.3 1490 H954.8 Q958.8 1490 958.8 1494 V1547.5 Q958.8 1551.5 954.8 1551.5 H813.3 Q809.3 1551.5 809.3 1547.5 Z" fill="url(#pbtn)"/><rect x="814.3" y="1495" width="139.5" height="36" rx="3.5" fill="#666666" stroke="#555" stroke-width="0.8"/><text x="884.05" y="1546.50" font-size="11" fill="#333333" text-anchor="middle" >40</text><path d="M961.25 1547.5 V1494 Q961.25 1490 965.25 1490 H1106.75 Q1110.75 1490 1110.75 1494 V1547.5 Q1110.75 1551.5 1106.75 1551.5 H965.25 Q961.25 1551.5 961.25 1547.5 Z" fill="url(#pbtn)"/><rect x="966.25" y="1495" width="139.5" height="36" rx="3.5" fill="#808080" stroke="#555" stroke-width="0.8"/><text x="1036.00" y="1546.50" font-size="11" fill="#333333" text-anchor="middle" >50</text><path d="M1113.1999999999998 1547.5 V1494 Q1113.1999999999998 1490 1117.1999999999998 1490 H1258.6999999999998 Q1262.6999999999998 1490 1262.6999999999998 1494 V1547.5 Q1262.6999999999998 1551.5 1258.6999999999998 1551.5 H1117.1999999999998 Q1113.1999999999998 1551.5 1113.1999999999998 1547.5 Z" fill="url(#pbtn)"/><rect x="1118.1999999999998" y="1495" width="139.5" height="36" rx="3.5" fill="#999999" stroke="#555" stroke-width="0.8"/><text x="1187.95" y="1546.50" font-size="11" fill="#333333" text-anchor="middle" >60</text><path d="M1265.1499999999999 1547.5 V1494 Q1265.1499999999999 1490 1269.1499999999999 1490 H1410.6499999999999 Q1414.6499999999999 1490 1414.6499999999999 1494 V1547.5 Q1414.6499999999999 1551.5 1410.6499999999999 1551.5 H1269.1499999999999 Q1265.1499999999999 1551.5 1265.1499999999999 1547.5 Z" fill="url(#pbtn)"/><rect x="1270.1499999999999" y="1495" width="139.5" height="36" rx="3.5" fill="#b3b3b3" stroke="#555" stroke-width="0.8"/><text x="1339.90" y="1546.50" font-size="11" fill="#333333" text-anchor="middle" >70</text><path d="M1417.1 1547.5 V1494 Q1417.1 1490 1421.1 1490 H1562.6 Q1566.6 1490 1566.6 1494 V1547.5 Q1566.6 1551.5 1562.6 1551.5 H1421.1 Q1417.1 1551.5 1417.1 1547.5 Z" fill="url(#pbtn)"/><rect x="1422.1" y="1495" width="139.5" height="36" rx="3.5" fill="#cccccc" stroke="#555" stroke-width="0.8"/><text x="1491.85" y="1546.50" font-size="11" fill="#333333" text-anchor="middle" >80</text><path d="M1569.05 1547.5 V1494 Q1569.05 1490 1573.05 1490 H1714.55 Q1718.55 1490 1718.55 1494 V1547.5 Q1718.55 1551.5 1714.55 1551.5 H1573.05 Q1569.05 1551.5 1569.05 1547.5 Z" fill="url(#pbtn)"/><rect x="1574.05" y="1495" width="139.5" height="36" rx="3.5" fill="#e6e6e6" stroke="#555" stroke-width="0.8"/><text x="1643.80" y="1546.50" font-size="11" fill="#333333" text-anchor="middle" >90</text><path d="M1721.0 1547.5 V1494 Q1721.0 1490 1725.0 1490 H1866.5 Q1870.5 1490 1870.5 1494 V1547.5 Q1870.5 1551.5 1866.5 1551.5 H1725.0 Q1721.0 1551.5 1721.0 1547.5 Z" fill="url(#pbtnsel)"/><rect x="1726.0" y="1495" width="139.5" height="36" rx="3.5" fill="#ffffff" stroke="#ffffff" stroke-width="0.8"/><text x="1795.75" y="1546.50" font-size="11" fill="#ffffff" font-weight="bold" text-anchor="middle" >100</text><rect x="2237.5" y="1490" width="47" height="62" rx="3" fill="url(#ctl)"/><rect x="2246" y="1515" width="29.5" height="29.5" rx="4" fill="none" stroke="#222" stroke-width="2.2"/><rect x="2254.50" y="1523.00" width="13.30" height="13.50" fill="#000" /><rect x="2286.00" y="1490.00" width="274.00" height="31.00" fill="#3a3a3a" /><rect x="2286.5" y="1490.5" width="44" height="29" rx="3" fill="url(#ctl2)"/><circle cx="2308.5" cy="1505" r="9.5" fill="url(#ctlc)" opacity="0.8"/><rect x="2331.7" y="1490.5" width="44" height="29" rx="3" fill="url(#ctl2)"/><circle cx="2353.7" cy="1505" r="9.5" fill="url(#ctlc)" opacity="0.8"/><rect x="2376.9" y="1490.5" width="44" height="29" rx="3" fill="url(#ctl2)"/><circle cx="2398.9" cy="1505" r="9.5" fill="url(#ctlc)" opacity="0.8"/><rect x="2422.1" y="1490.5" width="44" height="29" rx="3" fill="url(#ctl2)"/><circle cx="2444.1" cy="1505" r="9.5" fill="url(#ctlc)" opacity="0.8"/><rect x="2467.3" y="1490.5" width="44" height="29" rx="3" fill="url(#ctl2)"/><circle cx="2489.3" cy="1505" r="9.5" fill="url(#ctlc)" opacity="0.8"/><rect x="2512.5" y="1490.5" width="44" height="29" rx="3" fill="url(#ctl2)"/><circle cx="2534.5" cy="1505" r="9.5" fill="url(#ctlc)" opacity="0.8"/><rect x="2286.5" y="1521" width="135" height="31" rx="3" fill="url(#ctl)" stroke="#666" stroke-width="0.8"/><rect x="2422" y="1521" width="140" height="31" rx="3" fill="url(#ctl)" stroke="#666" stroke-width="0.8"/><circle cx="2317" cy="1535.7" r="9.5" fill="#8d8d8d"/><circle cx="2530" cy="1535.7" r="9.5" fill="#8d8d8d"/><text x="2317.00" y="1541.00" font-size="17" fill="#333" text-anchor="middle" >«</text><text x="2530.00" y="1541.00" font-size="17" fill="#333" text-anchor="middle" >»</text><text x="2343.80" y="1543.00" font-size="19" fill="#333333" textLength="50.00" lengthAdjust="spacingAndGlyphs" >Back</text><text x="2451.00" y="1543.00" font-size="19" fill="#333333" textLength="51.00" lengthAdjust="spacingAndGlyphs" >Next</text><mask id="wmmask" maskUnits="userSpaceOnUse" x="2150" y="1450" width="410" height="102"><rect x="2150" y="1450" width="410" height="102" fill="#fff"/><path d="M2226.9 1510.2 L2224.9 1480.6 L2176.9 1471.6 L2177.2 1519.9 L2208.7 1534.9 L2263.2 1517.3 L2232.1 1511.5" fill="none" stroke="#000" stroke-width="3.8" stroke-linejoin="round" stroke-linecap="round"/><path d="M2226.9 1510.2 L2187.3 1513.8" fill="none" stroke="#000" stroke-width="2.2" stroke-linecap="round"/><path d="M2189.2 1487.5 Q2193.5 1482.5 2197.5 1484.5 L2205 1496 L2231 1469.5 Q2234.5 1467.5 2233.5 1471.5 L2206.5 1506 Q2204.5 1508.5 2202.8 1506 Q2197 1494 2189.2 1487.5 Z" fill="#000"/><text x="2233.3" y="1508.8" font-size="37.4" font-weight="bold" textLength="197.6" lengthAdjust="spacingAndGlyphs" fill="#000">NOTEBOOK</text><text x="2431.5" y="1508.8" font-size="37.4" font-weight="bold" textLength="118.5" lengthAdjust="spacingAndGlyphs" fill="#000">CHECK</text></mask><g opacity="0.72" mask="url(#wmmask)"><path d="M2226.9 1510.2 L2224.9 1480.6 L2176.9 1471.6 L2177.2 1519.9 L2208.7 1534.9 L2263.2 1517.3 L2232.1 1511.5" fill="none" stroke="#d8d8d8" stroke-width="6.2" stroke-linejoin="round" stroke-linecap="round"/><path d="M2226.9 1510.2 L2187.3 1513.8" fill="none" stroke="#d8d8d8" stroke-width="6.2" stroke-linejoin="round" stroke-linecap="round"/><path d="M2189.2 1487.5 Q2193.5 1482.5 2197.5 1484.5 L2205 1496 L2231 1469.5 Q2234.5 1467.5 2233.5 1471.5 L2206.5 1506 Q2204.5 1508.5 2202.8 1506 Q2197 1494 2189.2 1487.5 Z" fill="none" stroke="#d8d8d8" stroke-width="2.4"/><text x="2233.3" y="1508.8" font-size="37.4" font-weight="bold" textLength="197.6" lengthAdjust="spacingAndGlyphs" fill="none" stroke="#d8d8d8" stroke-width="3" stroke-linejoin="round">NOTEBOOK</text><text x="2431.5" y="1508.8" font-size="37.4" font-weight="bold" textLength="118.5" lengthAdjust="spacingAndGlyphs" fill="none" stroke="#d8d8d8" stroke-width="3" stroke-linejoin="round">CHECK</text></g><g opacity="0.58"><path d="M2226.9 1510.2 L2224.9 1480.6 L2176.9 1471.6 L2177.2 1519.9 L2208.7 1534.9 L2263.2 1517.3 L2232.1 1511.5" fill="none" stroke="#b4222a" stroke-width="3.8" stroke-linejoin="round" stroke-linecap="round"/><path d="M2226.9 1510.2 L2187.3 1513.8" fill="none" stroke="#b4222a" stroke-width="2.2" stroke-linecap="round"/><path d="M2189.2 1487.5 Q2193.5 1482.5 2197.5 1484.5 L2205 1496 L2231 1469.5 Q2234.5 1467.5 2233.5 1471.5 L2206.5 1506 Q2204.5 1508.5 2202.8 1506 Q2197 1494 2189.2 1487.5 Z" fill="#2a2a2a"/><text x="2233.3" y="1508.8" font-size="37.4" font-weight="bold" textLength="197.6" lengthAdjust="spacingAndGlyphs" fill="#b4222a">NOTEBOOK</text><text x="2431.5" y="1508.8" font-size="37.4" font-weight="bold" textLength="118.5" lengthAdjust="spacingAndGlyphs" fill="#141414">CHECK</text></g></svg></body></html>
